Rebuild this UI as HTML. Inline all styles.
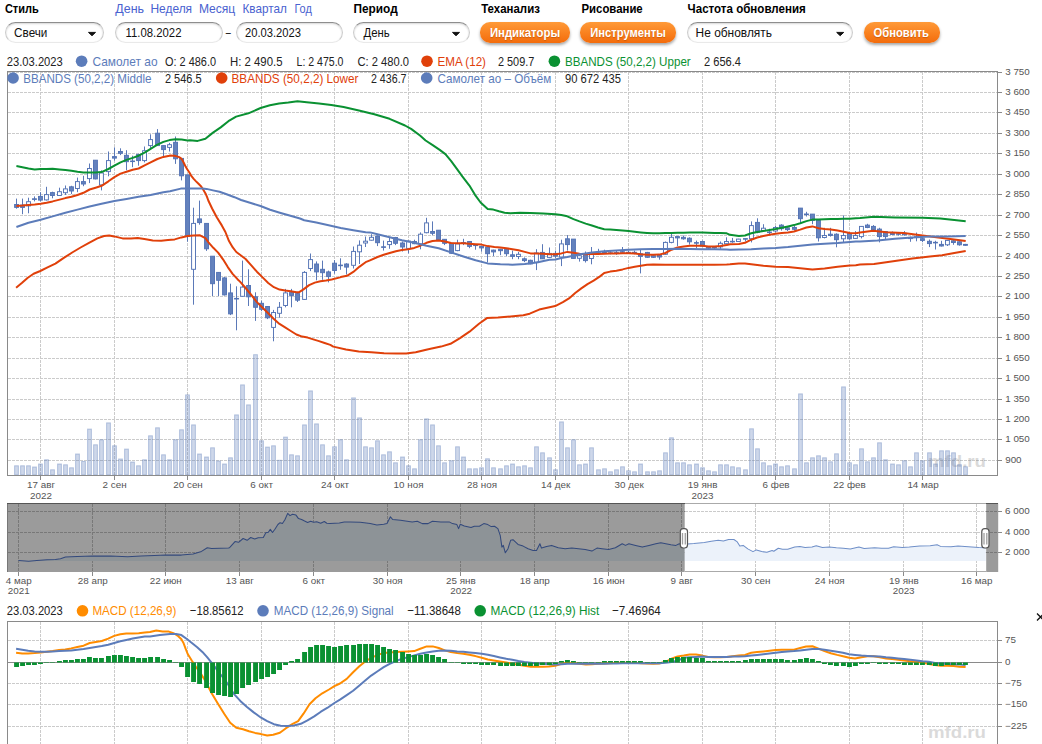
<!DOCTYPE html>
<html><head><meta charset="utf-8"><title>chart</title>
<style>
html,body{margin:0;padding:0;background:#fff;}
body{width:1042px;height:744px;position:relative;overflow:hidden;font-family:"Liberation Sans",sans-serif;}
.sel{position:absolute;top:22px;height:19px;border:1px solid;border-color:#8e8e8e #cbcbcb #e9e9e9 #cbcbcb;border-radius:11px;background:#fff;box-shadow:inset 0 1px 2px rgba(0,0,0,.16);}
.btn{position:absolute;top:22px;height:20.5px;border-radius:10px;background:linear-gradient(#ff9a38,#f9801e 55%,#f36c0c);box-shadow:0 2px 3px rgba(0,0,0,.35);}
svg{position:absolute;left:0;top:0;font-family:"Liberation Sans",sans-serif;}
</style></head><body>
<div class="sel" style="left:5px;width:97px"></div>
<div class="sel" style="left:115px;width:106px"></div>
<div class="sel" style="left:235.5px;width:105px"></div>
<div class="sel" style="left:353px;width:114.5px"></div>
<div class="sel" style="left:686.5px;width:164.5px"></div>
<div class="btn" style="left:480px;width:90px"></div>
<div class="btn" style="left:580px;width:96px"></div>
<div class="btn" style="left:863.5px;width:76.5px"></div>
<svg width="1042" height="744" viewBox="0 0 1042 744">
<text x="4.9" y="13.1" font-size="13" fill="#000" font-weight="bold" textLength="33.9" lengthAdjust="spacingAndGlyphs">Стиль</text>
<text x="115.3" y="13.1" font-size="13" fill="#4a62d0" textLength="28.7" lengthAdjust="spacingAndGlyphs">День</text>
<text x="150.4" y="13.1" font-size="13" fill="#4a62d0" textLength="41.7" lengthAdjust="spacingAndGlyphs">Неделя</text>
<text x="198.9" y="13.1" font-size="13" fill="#4a62d0" textLength="36.4" lengthAdjust="spacingAndGlyphs">Месяц</text>
<text x="242.5" y="13.1" font-size="13" fill="#4a62d0" textLength="44.4" lengthAdjust="spacingAndGlyphs">Квартал</text>
<text x="294.4" y="13.1" font-size="13" fill="#4a62d0" textLength="17.4" lengthAdjust="spacingAndGlyphs">Год</text>
<text x="353.5" y="13.1" font-size="13" fill="#000" font-weight="bold" textLength="44.2" lengthAdjust="spacingAndGlyphs">Период</text>
<text x="481.2" y="13.1" font-size="13" fill="#000" font-weight="bold" textLength="58.7" lengthAdjust="spacingAndGlyphs">Теханализ</text>
<text x="581.5" y="13.1" font-size="13" fill="#000" font-weight="bold" textLength="61.2" lengthAdjust="spacingAndGlyphs">Рисование</text>
<text x="687.6" y="13.1" font-size="13" fill="#000" font-weight="bold" textLength="118.2" lengthAdjust="spacingAndGlyphs">Частота обновления</text>
<text x="14.1" y="37.3" font-size="13" fill="#111" textLength="33.3" lengthAdjust="spacingAndGlyphs">Свечи</text>
<text x="125.5" y="37.3" font-size="13" fill="#111" textLength="56" lengthAdjust="spacingAndGlyphs">11.08.2022</text>
<text x="225.8" y="37.3" font-size="13" fill="#111" textLength="5" lengthAdjust="spacingAndGlyphs">–</text>
<text x="245" y="37.3" font-size="13" fill="#111" textLength="56" lengthAdjust="spacingAndGlyphs">20.03.2023</text>
<text x="363.5" y="37.3" font-size="13" fill="#111" textLength="26.2" lengthAdjust="spacingAndGlyphs">День</text>
<text x="695.6" y="37.3" font-size="13" fill="#111" textLength="76.4" lengthAdjust="spacingAndGlyphs">Не обновлять</text>
<path d="M88.5 32.4 h7 l-3.5 3.3 z" fill="#111" stroke="#111" stroke-width="1" stroke-linejoin="round"/>
<path d="M452.5 32.4 h7 l-3.5 3.3 z" fill="#111" stroke="#111" stroke-width="1" stroke-linejoin="round"/>
<path d="M836.7 32.4 h7 l-3.5 3.3 z" fill="#111" stroke="#111" stroke-width="1" stroke-linejoin="round"/>
<text x="489.9" y="37.2" font-size="13" fill="#fff" font-weight="bold" textLength="70.2" lengthAdjust="spacingAndGlyphs" style="text-shadow:0 1px 1px rgba(170,70,0,.55)">Индикаторы</text>
<text x="590.3" y="37.2" font-size="13" fill="#fff" font-weight="bold" textLength="75.6" lengthAdjust="spacingAndGlyphs" style="text-shadow:0 1px 1px rgba(170,70,0,.55)">Инструменты</text>
<text x="873.5" y="37.2" font-size="13" fill="#fff" font-weight="bold" textLength="55.5" lengthAdjust="spacingAndGlyphs" style="text-shadow:0 1px 1px rgba(170,70,0,.55)">Обновить</text>
<g stroke="#cbcbcb" stroke-width="1" stroke-dasharray="3 1" fill="none" shape-rendering="crispEdges">
<path d="M7.5 72.5 H997.5"/>
<path d="M7.5 92.5 H997.5"/>
<path d="M7.5 112.5 H997.5"/>
<path d="M7.5 133.5 H997.5"/>
<path d="M7.5 153.5 H997.5"/>
<path d="M7.5 174.5 H997.5"/>
<path d="M7.5 194.5 H997.5"/>
<path d="M7.5 215.5 H997.5"/>
<path d="M7.5 235.5 H997.5"/>
<path d="M7.5 256.5 H997.5"/>
<path d="M7.5 276.5 H997.5"/>
<path d="M7.5 296.5 H997.5"/>
<path d="M7.5 317.5 H997.5"/>
<path d="M7.5 337.5 H997.5"/>
<path d="M7.5 358.5 H997.5"/>
<path d="M7.5 378.5 H997.5"/>
<path d="M7.5 399.5 H997.5"/>
<path d="M7.5 419.5 H997.5"/>
<path d="M7.5 439.5 H997.5"/>
<path d="M7.5 460.5 H997.5"/>
<path d="M40.5 71.5 V475.5"/>
<path d="M114.5 71.5 V475.5"/>
<path d="M187.5 71.5 V475.5"/>
<path d="M261.5 71.5 V475.5"/>
<path d="M334.5 71.5 V475.5"/>
<path d="M408.5 71.5 V475.5"/>
<path d="M481.5 71.5 V475.5"/>
<path d="M555.5 71.5 V475.5"/>
<path d="M628.5 71.5 V475.5"/>
<path d="M702.5 71.5 V475.5"/>
<path d="M775.5 71.5 V475.5"/>
<path d="M849.5 71.5 V475.5"/>
<path d="M922.5 71.5 V475.5"/>
</g>
<text x="928" y="467" font-size="17" fill="#888" font-weight="bold" textLength="58" lengthAdjust="spacingAndGlyphs" opacity="0.30">mfd.ru</text>
<g fill="#5c7cba" fill-opacity="0.30" stroke="#5c7cba" stroke-opacity="0.40" stroke-width="1">
<rect x="14.6" y="465.8" width="3.8" height="9.2"/>
<rect x="20.6" y="465.8" width="3.8" height="9.2"/>
<rect x="26.6" y="465.8" width="3.8" height="9.2"/>
<rect x="32.6" y="467" width="3.8" height="8"/>
<rect x="38.6" y="464" width="3.8" height="11"/>
<rect x="44.6" y="459.8" width="3.8" height="15.2"/>
<rect x="50.6" y="469.8" width="3.8" height="5.2"/>
<rect x="57.6" y="464" width="3.8" height="11"/>
<rect x="63.6" y="464.8" width="3.8" height="10.2"/>
<rect x="69.6" y="467.8" width="3.8" height="7.2"/>
<rect x="75.6" y="454" width="3.8" height="21"/>
<rect x="81.6" y="461.5" width="3.8" height="13.5"/>
<rect x="87.6" y="429.1" width="3.8" height="45.9"/>
<rect x="93.6" y="444.8" width="3.8" height="30.2"/>
<rect x="99.6" y="439.8" width="3.8" height="35.2"/>
<rect x="106.6" y="422.9" width="3.8" height="52.1"/>
<rect x="112.6" y="445.8" width="3.8" height="29.2"/>
<rect x="118.6" y="459" width="3.8" height="16"/>
<rect x="124.6" y="449.1" width="3.8" height="25.9"/>
<rect x="130.6" y="462" width="3.8" height="13"/>
<rect x="136.6" y="465.8" width="3.8" height="9.2"/>
<rect x="142.6" y="459.8" width="3.8" height="15.2"/>
<rect x="148.6" y="435.8" width="3.8" height="39.2"/>
<rect x="155.6" y="427.8" width="3.8" height="47.2"/>
<rect x="161.6" y="454.8" width="3.8" height="20.2"/>
<rect x="167.6" y="459.8" width="3.8" height="15.2"/>
<rect x="173.6" y="439.8" width="3.8" height="35.2"/>
<rect x="179.6" y="429.8" width="3.8" height="45.2"/>
<rect x="185.6" y="394.9" width="3.8" height="80.1"/>
<rect x="191.6" y="424.9" width="3.8" height="50.1"/>
<rect x="197.6" y="454" width="3.8" height="21"/>
<rect x="204.6" y="457" width="3.8" height="18"/>
<rect x="210.6" y="447.8" width="3.8" height="27.2"/>
<rect x="216.6" y="461" width="3.8" height="14"/>
<rect x="222.6" y="464" width="3.8" height="11"/>
<rect x="228.6" y="457.8" width="3.8" height="17.2"/>
<rect x="234.6" y="414.9" width="3.8" height="60.1"/>
<rect x="240.6" y="384.9" width="3.8" height="90.1"/>
<rect x="246.6" y="404.9" width="3.8" height="70.1"/>
<rect x="253.6" y="354.7" width="3.8" height="120.3"/>
<rect x="259.6" y="440.8" width="3.8" height="34.2"/>
<rect x="265.6" y="447.1" width="3.8" height="27.9"/>
<rect x="271.6" y="445.8" width="3.8" height="29.2"/>
<rect x="277.6" y="460.3" width="3.8" height="14.7"/>
<rect x="283.6" y="437.1" width="3.8" height="37.9"/>
<rect x="289.6" y="454.8" width="3.8" height="20.2"/>
<rect x="295.6" y="455.8" width="3.8" height="19.2"/>
<rect x="302.6" y="424.9" width="3.8" height="50.1"/>
<rect x="308.6" y="390.9" width="3.8" height="84.1"/>
<rect x="314.6" y="423.9" width="3.8" height="51.1"/>
<rect x="320.6" y="444.8" width="3.8" height="30.2"/>
<rect x="326.6" y="455.8" width="3.8" height="19.2"/>
<rect x="332.6" y="446.8" width="3.8" height="28.2"/>
<rect x="338.6" y="439.8" width="3.8" height="35.2"/>
<rect x="344.6" y="459.8" width="3.8" height="15.2"/>
<rect x="351.6" y="397.9" width="3.8" height="77.1"/>
<rect x="357.6" y="417.9" width="3.8" height="57.1"/>
<rect x="363.6" y="446.8" width="3.8" height="28.2"/>
<rect x="369.6" y="447.8" width="3.8" height="27.2"/>
<rect x="375.6" y="440.8" width="3.8" height="34.2"/>
<rect x="381.6" y="454.8" width="3.8" height="20.2"/>
<rect x="387.6" y="451.8" width="3.8" height="23.2"/>
<rect x="393.6" y="462.8" width="3.8" height="12.2"/>
<rect x="400.6" y="457" width="3.8" height="18"/>
<rect x="406.6" y="465.8" width="3.8" height="9.2"/>
<rect x="412.6" y="468.8" width="3.8" height="6.2"/>
<rect x="418.6" y="439.8" width="3.8" height="35.2"/>
<rect x="424.6" y="418.9" width="3.8" height="56.1"/>
<rect x="430.6" y="424.9" width="3.8" height="50.1"/>
<rect x="436.6" y="445.8" width="3.8" height="29.2"/>
<rect x="442.6" y="462.8" width="3.8" height="12.2"/>
<rect x="449.6" y="460.8" width="3.8" height="14.2"/>
<rect x="455.6" y="446.8" width="3.8" height="28.2"/>
<rect x="461.6" y="457" width="3.8" height="18"/>
<rect x="467.6" y="468.8" width="3.8" height="6.2"/>
<rect x="473.6" y="468.8" width="3.8" height="6.2"/>
<rect x="479.6" y="467.8" width="3.8" height="7.2"/>
<rect x="485.6" y="458.8" width="3.8" height="16.2"/>
<rect x="491.6" y="467.8" width="3.8" height="7.2"/>
<rect x="498.6" y="468.8" width="3.8" height="6.2"/>
<rect x="504.6" y="465.8" width="3.8" height="9.2"/>
<rect x="510.6" y="464" width="3.8" height="11"/>
<rect x="516.6" y="466.8" width="3.8" height="8.2"/>
<rect x="522.6" y="465.8" width="3.8" height="9.2"/>
<rect x="528.6" y="467.8" width="3.8" height="7.2"/>
<rect x="534.6" y="446.8" width="3.8" height="28.2"/>
<rect x="540.6" y="452.8" width="3.8" height="22.2"/>
<rect x="547.6" y="457.8" width="3.8" height="17.2"/>
<rect x="553.6" y="469.8" width="3.8" height="5.2"/>
<rect x="559.6" y="421.9" width="3.8" height="53.1"/>
<rect x="565.6" y="447.8" width="3.8" height="27.2"/>
<rect x="571.6" y="439.8" width="3.8" height="35.2"/>
<rect x="577.6" y="464.8" width="3.8" height="10.2"/>
<rect x="583.6" y="464" width="3.8" height="11"/>
<rect x="589.6" y="447.8" width="3.8" height="27.2"/>
<rect x="596.6" y="469.8" width="3.8" height="5.2"/>
<rect x="602.6" y="468.8" width="3.8" height="6.2"/>
<rect x="608.6" y="471.8" width="3.8" height="3.2"/>
<rect x="614.6" y="469.8" width="3.8" height="5.2"/>
<rect x="620.6" y="466.8" width="3.8" height="8.2"/>
<rect x="626.6" y="470.8" width="3.8" height="4.2"/>
<rect x="632.6" y="471.8" width="3.8" height="3.2"/>
<rect x="638.6" y="464" width="3.8" height="11"/>
<rect x="645.6" y="471.8" width="3.8" height="3.2"/>
<rect x="651.6" y="471.8" width="3.8" height="3.2"/>
<rect x="657.6" y="470.8" width="3.8" height="4.2"/>
<rect x="663.6" y="452.8" width="3.8" height="22.2"/>
<rect x="669.6" y="437.8" width="3.8" height="37.2"/>
<rect x="675.6" y="462.8" width="3.8" height="12.2"/>
<rect x="681.6" y="462.8" width="3.8" height="12.2"/>
<rect x="687.6" y="464.8" width="3.8" height="10.2"/>
<rect x="694.6" y="464" width="3.8" height="11"/>
<rect x="700.6" y="467.8" width="3.8" height="7.2"/>
<rect x="706.6" y="470.8" width="3.8" height="4.2"/>
<rect x="712.6" y="471.8" width="3.8" height="3.2"/>
<rect x="718.6" y="464.8" width="3.8" height="10.2"/>
<rect x="724.6" y="464.8" width="3.8" height="10.2"/>
<rect x="730.6" y="466.8" width="3.8" height="8.2"/>
<rect x="736.6" y="467.8" width="3.8" height="7.2"/>
<rect x="743.6" y="469.8" width="3.8" height="5.2"/>
<rect x="749.6" y="428.8" width="3.8" height="46.2"/>
<rect x="755.6" y="448.8" width="3.8" height="26.2"/>
<rect x="761.6" y="462.8" width="3.8" height="12.2"/>
<rect x="767.6" y="465.8" width="3.8" height="9.2"/>
<rect x="773.6" y="464" width="3.8" height="11"/>
<rect x="779.6" y="466.8" width="3.8" height="8.2"/>
<rect x="785.6" y="465.8" width="3.8" height="9.2"/>
<rect x="792.6" y="468.8" width="3.8" height="6.2"/>
<rect x="798.6" y="393.9" width="3.8" height="81.1"/>
<rect x="804.6" y="462.8" width="3.8" height="12.2"/>
<rect x="810.6" y="457.8" width="3.8" height="17.2"/>
<rect x="816.6" y="455.8" width="3.8" height="19.2"/>
<rect x="822.6" y="457.8" width="3.8" height="17.2"/>
<rect x="828.6" y="461.8" width="3.8" height="13.2"/>
<rect x="834.6" y="453.8" width="3.8" height="21.2"/>
<rect x="841.6" y="386.9" width="3.8" height="88.1"/>
<rect x="847.6" y="462.8" width="3.8" height="12.2"/>
<rect x="853.6" y="464.8" width="3.8" height="10.2"/>
<rect x="859.6" y="448.8" width="3.8" height="26.2"/>
<rect x="865.6" y="461.8" width="3.8" height="13.2"/>
<rect x="871.6" y="457.8" width="3.8" height="17.2"/>
<rect x="877.6" y="442.8" width="3.8" height="32.2"/>
<rect x="883.6" y="459.8" width="3.8" height="15.2"/>
<rect x="890.6" y="464" width="3.8" height="11"/>
<rect x="896.6" y="464.8" width="3.8" height="10.2"/>
<rect x="902.6" y="460.8" width="3.8" height="14.2"/>
<rect x="908.6" y="466.8" width="3.8" height="8.2"/>
<rect x="914.6" y="452.8" width="3.8" height="22.2"/>
<rect x="920.6" y="460.8" width="3.8" height="14.2"/>
<rect x="927.6" y="452.8" width="3.8" height="22.2"/>
<rect x="933.6" y="464" width="3.8" height="11"/>
<rect x="939.6" y="450.8" width="3.8" height="24.2"/>
<rect x="945.6" y="450.8" width="3.8" height="24.2"/>
<rect x="951.6" y="452.8" width="3.8" height="22.2"/>
<rect x="957.6" y="464.8" width="3.8" height="10.2"/>
<rect x="963.6" y="466.8" width="3.8" height="8.2"/>
</g>
<g stroke="#5272b4" stroke-width="0.95">
<path d="M16.5 198.6 V208.7"/>
<rect x="14.6" y="204.5" width="3.9" height="2.9" fill="#6482bd"/>
<path d="M22.5 198.6 V214.2"/>
<rect x="20.6" y="205" width="3.9" height="2.4" fill="#6482bd"/>
<path d="M28.5 197.7 V213.3"/>
<rect x="26.6" y="201.7" width="3.9" height="4.2" fill="#fff"/>
<path d="M34.5 196.4 V201.4"/>
<rect x="32.5" y="198.8" width="3.9" height="0.6" fill="#6482bd"/>
<path d="M40.5 192.2 V201.4"/>
<rect x="38.5" y="196.4" width="3.9" height="3.7" fill="#6482bd"/>
<path d="M46.5 186.8 V200.5"/>
<rect x="44.5" y="194.6" width="3.9" height="5.3" fill="#fff"/>
<path d="M52.5 191.7 V198.3"/>
<rect x="50.5" y="192.6" width="3.9" height="2.9" fill="#6482bd"/>
<path d="M59.5 187.7 V195.9"/>
<rect x="57.5" y="191.7" width="3.9" height="3.8" fill="#fff"/>
<path d="M65.5 185.5 V195"/>
<rect x="63.5" y="188.9" width="3.9" height="3.8" fill="#fff"/>
<path d="M71.5 185.8 V194.1"/>
<rect x="69.5" y="186.8" width="3.9" height="4.2" fill="#6482bd"/>
<path d="M77.5 177.6 V192.2"/>
<rect x="75.5" y="181.6" width="3.9" height="6.9" fill="#fff"/>
<path d="M83.5 175.8 V186.2"/>
<rect x="81.5" y="181.6" width="3.9" height="2.4" fill="#6482bd"/>
<path d="M89.5 163.5 V183.1"/>
<rect x="87.5" y="168.5" width="3.9" height="10.1" fill="#fff"/>
<path d="M95.5 160.2 V179.4"/>
<rect x="93.5" y="160.2" width="3.9" height="18.7" fill="#6482bd"/>
<path d="M101.5 170.3 V190.4"/>
<rect x="99.5" y="173" width="3.9" height="11.9" fill="#fff"/>
<path d="M108.5 151.5 V176.3"/>
<rect x="106.5" y="160.6" width="3.9" height="11" fill="#fff"/>
<path d="M114.5 147.4 V160.6"/>
<rect x="112.5" y="156.6" width="3.9" height="1.5" fill="#6482bd"/>
<path d="M120.5 148.3 V155.1"/>
<rect x="118.5" y="151.5" width="3.9" height="1.8" fill="#6482bd"/>
<path d="M126.5 150.2 V170.3"/>
<rect x="124.5" y="155.3" width="3.9" height="6.4" fill="#6482bd"/>
<path d="M132.5 155.7 V167.2"/>
<rect x="130.6" y="161" width="3.9" height="0.6" fill="#6482bd"/>
<path d="M138.5 153.8 V165.7"/>
<rect x="136.6" y="154.4" width="3.9" height="6.2" fill="#6482bd"/>
<path d="M144.5 146.5 V162.4"/>
<rect x="142.6" y="150.7" width="3.9" height="9.9" fill="#fff"/>
<path d="M150.5 134.3 V148.3"/>
<rect x="148.6" y="139.6" width="3.9" height="6" fill="#fff"/>
<path d="M157.5 129.1 V145.6"/>
<rect x="155.6" y="133.2" width="3.9" height="12.4" fill="#6482bd"/>
<path d="M163.5 145.6 V156.6"/>
<rect x="161.6" y="145.6" width="3.9" height="4" fill="#6482bd"/>
<path d="M169.5 142.9 V151.5"/>
<rect x="167.6" y="144.7" width="3.9" height="2.7" fill="#fff"/>
<path d="M175.5 136.5 V163.9"/>
<rect x="173.6" y="142.3" width="3.9" height="16.5" fill="#6482bd"/>
<path d="M181.5 158.4 V180.4"/>
<rect x="179.6" y="158.4" width="3.9" height="17.4" fill="#6482bd"/>
<path d="M187.5 174.9 V241.7"/>
<rect x="185.6" y="174.9" width="3.9" height="61.6" fill="#6482bd"/>
<path d="M193.5 207.7 V304.7"/>
<rect x="191.6" y="223.4" width="3.9" height="45.9" fill="#fff"/>
<path d="M199.5 200.6 V224.7"/>
<rect x="197.6" y="218.9" width="3.9" height="3.7" fill="#6482bd"/>
<path d="M206.5 223.4 V250.9"/>
<rect x="204.6" y="223.4" width="3.9" height="25.4" fill="#6482bd"/>
<path d="M212.5 256.2 V296"/>
<rect x="210.6" y="256.2" width="3.9" height="27.5" fill="#6482bd"/>
<path d="M218.5 272.4 V296"/>
<rect x="216.6" y="272.4" width="3.9" height="7.9" fill="#6482bd"/>
<path d="M224.5 277.1 V295.5"/>
<rect x="222.6" y="277.9" width="3.9" height="17" fill="#6482bd"/>
<path d="M230.5 283.7 V315.1"/>
<rect x="228.6" y="292.9" width="3.9" height="21" fill="#6482bd"/>
<path d="M236.5 286.3 V330.3"/>
<rect x="234.6" y="298.4" width="3.9" height="0.6" fill="#6482bd"/>
<path d="M242.5 260.6 V296.8"/>
<rect x="240.6" y="287.1" width="3.9" height="9.2" fill="#fff"/>
<path d="M248.5 269.3 V306"/>
<rect x="246.6" y="285.5" width="3.9" height="11.3" fill="#6482bd"/>
<path d="M255.5 292.3 V320.9"/>
<rect x="253.6" y="296.8" width="3.9" height="10.5" fill="#6482bd"/>
<path d="M261.5 300.7 V311.2"/>
<rect x="259.6" y="303.3" width="3.9" height="6" fill="#6482bd"/>
<path d="M267.5 306.5 V319.1"/>
<rect x="265.6" y="306.5" width="3.9" height="11.3" fill="#6482bd"/>
<path d="M273.5 309.9 V341.3"/>
<rect x="271.6" y="312.5" width="3.9" height="14.9" fill="#fff"/>
<path d="M279.5 302 V317.8"/>
<rect x="277.6" y="307.3" width="3.9" height="6" fill="#fff"/>
<path d="M285.5 288.9 V307.3"/>
<rect x="283.6" y="292.9" width="3.9" height="12.6" fill="#fff"/>
<path d="M291.5 288.9 V307.3"/>
<rect x="289.6" y="292.3" width="3.9" height="3.1" fill="#6482bd"/>
<path d="M297.5 292.9 V302"/>
<rect x="295.6" y="293.6" width="3.9" height="6.6" fill="#6482bd"/>
<path d="M304.5 271.1 V299.9"/>
<rect x="302.6" y="272.4" width="3.9" height="27" fill="#fff"/>
<path d="M310.5 253.5 V271.1"/>
<rect x="308.6" y="259.6" width="3.9" height="8.9" fill="#fff"/>
<path d="M316.5 261.4 V280.3"/>
<rect x="314.6" y="264" width="3.9" height="7.9" fill="#6482bd"/>
<path d="M322.5 260.6 V279.8"/>
<rect x="320.6" y="269.3" width="3.9" height="3.4" fill="#6482bd"/>
<path d="M328.5 270.6 V282.4"/>
<rect x="326.6" y="271.9" width="3.9" height="4.7" fill="#6482bd"/>
<path d="M334.5 260.1 V273.7"/>
<rect x="332.6" y="263.2" width="3.9" height="7.3" fill="#6482bd"/>
<path d="M340.5 258.3 V269.8"/>
<rect x="338.6" y="265.1" width="3.9" height="0.6" fill="#6482bd"/>
<path d="M346.5 263.2 V274.5"/>
<rect x="344.6" y="264" width="3.9" height="3.1" fill="#6482bd"/>
<path d="M353.5 246.5 V268.5"/>
<rect x="351.6" y="251.4" width="3.9" height="13.9" fill="#fff"/>
<path d="M359.5 240.4 V264"/>
<rect x="357.6" y="245.2" width="3.9" height="6.6" fill="#fff"/>
<path d="M365.5 236.5 V247"/>
<rect x="363.6" y="241.2" width="3.9" height="1.8" fill="#fff"/>
<path d="M371.5 234.2 V240.6"/>
<rect x="369.6" y="237.3" width="3.9" height="2.9" fill="#fff"/>
<path d="M377.5 235.5 V246.1"/>
<rect x="375.6" y="236" width="3.9" height="6.7" fill="#6482bd"/>
<path d="M383.5 240.6 V250.6"/>
<rect x="381.6" y="246.8" width="3.9" height="0.6" fill="#6482bd"/>
<path d="M389.5 236.9 V248.8"/>
<rect x="387.6" y="241.5" width="3.9" height="3.1" fill="#fff"/>
<path d="M395.5 236.9 V245.1"/>
<rect x="393.6" y="237.5" width="3.9" height="5.8" fill="#6482bd"/>
<path d="M402.5 241.5 V251.5"/>
<rect x="400.6" y="243" width="3.9" height="4" fill="#6482bd"/>
<path d="M408.5 240.6 V253.4"/>
<rect x="406.6" y="241.1" width="3.9" height="7.3" fill="#fff"/>
<path d="M414.5 239.7 V244.2"/>
<rect x="412.6" y="241.5" width="3.9" height="2.2" fill="#6482bd"/>
<path d="M420.5 232.4 V249.3"/>
<rect x="418.6" y="234.2" width="3.9" height="9.7" fill="#fff"/>
<path d="M426.5 217.8 V233.3"/>
<rect x="424.6" y="222.9" width="3.9" height="9.8" fill="#fff"/>
<path d="M432.5 221.4 V235.1"/>
<rect x="430.6" y="231.5" width="3.9" height="1.8" fill="#6482bd"/>
<path d="M438.5 230.2 V240.6"/>
<rect x="436.6" y="230.2" width="3.9" height="10" fill="#6482bd"/>
<path d="M444.5 239.3 V245.1"/>
<rect x="442.6" y="239.3" width="3.9" height="4" fill="#6482bd"/>
<path d="M451.5 242.8 V253.7"/>
<rect x="449.6" y="243.3" width="3.9" height="10" fill="#6482bd"/>
<path d="M457.5 239.7 V251.2"/>
<rect x="455.6" y="243.9" width="3.9" height="6.7" fill="#fff"/>
<path d="M463.5 238.8 V245.1"/>
<rect x="461.6" y="242.6" width="3.9" height="0.6" fill="#6482bd"/>
<path d="M469.5 241.5 V248.2"/>
<rect x="467.6" y="241.5" width="3.9" height="4.9" fill="#6482bd"/>
<path d="M475.5 244.2 V249.7"/>
<rect x="473.6" y="245" width="3.9" height="0.6" fill="#6482bd"/>
<path d="M481.5 246.1 V251.5"/>
<rect x="479.6" y="246.4" width="3.9" height="1.5" fill="#6482bd"/>
<path d="M487.5 246.6 V262.5"/>
<rect x="485.6" y="247" width="3.9" height="6.7" fill="#6482bd"/>
<path d="M493.5 249.7 V256.1"/>
<rect x="491.6" y="250.1" width="3.9" height="1.8" fill="#6482bd"/>
<path d="M500.5 248.8 V255.2"/>
<rect x="498.6" y="249.2" width="3.9" height="1.5" fill="#6482bd"/>
<path d="M506.5 249.3 V256.1"/>
<rect x="504.6" y="249.3" width="3.9" height="4.4" fill="#6482bd"/>
<path d="M512.5 250.6 V259.2"/>
<rect x="510.6" y="254.8" width="3.9" height="1.6" fill="#6482bd"/>
<path d="M518.5 251.9 V259.2"/>
<rect x="516.5" y="254.3" width="3.9" height="2.2" fill="#fff"/>
<path d="M524.5 257.4 V262.1"/>
<rect x="522.5" y="258.8" width="3.9" height="1.8" fill="#6482bd"/>
<path d="M530.5 259.7 V264.3"/>
<rect x="528.5" y="260.3" width="3.9" height="3.6" fill="#6482bd"/>
<path d="M536.5 249.2 V270.1"/>
<rect x="534.5" y="253" width="3.9" height="9.1" fill="#fff"/>
<path d="M542.5 244.2 V258.8"/>
<rect x="540.5" y="252.4" width="3.9" height="6.4" fill="#6482bd"/>
<path d="M549.5 247.5 V257.9"/>
<rect x="547.5" y="253.4" width="3.9" height="4" fill="#fff"/>
<path d="M555.5 250.6 V257.9"/>
<rect x="553.5" y="253.4" width="3.9" height="2.7" fill="#6482bd"/>
<path d="M561.5 239.7 V266.1"/>
<rect x="559.5" y="243.9" width="3.9" height="13.1" fill="#fff"/>
<path d="M567.5 235.1 V250.6"/>
<rect x="565.5" y="238.8" width="3.9" height="5.8" fill="#6482bd"/>
<path d="M573.5 239.1 V258.5"/>
<rect x="571.5" y="239.1" width="3.9" height="19.3" fill="#6482bd"/>
<path d="M579.5 253.4 V261.6"/>
<rect x="577.5" y="255.7" width="3.9" height="2.6" fill="#fff"/>
<path d="M585.5 251.5 V262.5"/>
<rect x="583.5" y="253.7" width="3.9" height="6.9" fill="#6482bd"/>
<path d="M591.5 247 V264.3"/>
<rect x="589.5" y="253" width="3.9" height="5.5" fill="#fff"/>
<path d="M598.5 248.8 V254.3"/>
<rect x="596.5" y="252.8" width="3.9" height="0.6" fill="#6482bd"/>
<path d="M604.5 249.7 V253.7"/>
<rect x="602.5" y="252.3" width="3.9" height="0.6" fill="#6482bd"/>
<path d="M610.5 250.6 V254.3"/>
<rect x="608.5" y="252.8" width="3.9" height="0.6" fill="#6482bd"/>
<path d="M616.5 250.6 V254.8"/>
<rect x="614.5" y="252.6" width="3.9" height="0.6" fill="#6482bd"/>
<path d="M622.5 247 V253.7"/>
<rect x="620.5" y="251.7" width="3.9" height="0.6" fill="#6482bd"/>
<path d="M628.5 250.6 V253.7"/>
<rect x="626.5" y="252.3" width="3.9" height="0.6" fill="#6482bd"/>
<path d="M634.5 250.6 V254.3"/>
<rect x="632.5" y="252.3" width="3.9" height="0.6" fill="#6482bd"/>
<path d="M640.5 249.7 V273.4"/>
<rect x="638.5" y="253.7" width="3.9" height="2.7" fill="#6482bd"/>
<path d="M647.5 251.9 V257.9"/>
<rect x="645.5" y="252.4" width="3.9" height="4.9" fill="#6482bd"/>
<path d="M653.5 255.2 V257.9"/>
<rect x="651.5" y="255.7" width="3.9" height="1.6" fill="#6482bd"/>
<path d="M659.5 254.3 V259.7"/>
<rect x="657.5" y="255.2" width="3.9" height="1.8" fill="#6482bd"/>
<path d="M665.5 241.5 V254.8"/>
<rect x="663.5" y="242.4" width="3.9" height="11.9" fill="#fff"/>
<path d="M671.5 233.7 V243.3"/>
<rect x="669.5" y="237.3" width="3.9" height="5.1" fill="#fff"/>
<path d="M677.5 236 V246.1"/>
<rect x="675.5" y="236.6" width="3.9" height="1.3" fill="#6482bd"/>
<path d="M683.5 235.5 V239.7"/>
<rect x="681.5" y="237.3" width="3.9" height="1.5" fill="#6482bd"/>
<path d="M689.5 237.3 V244.6"/>
<rect x="687.5" y="238.2" width="3.9" height="3.6" fill="#6482bd"/>
<path d="M696.5 240.6 V248.2"/>
<rect x="694.5" y="242.6" width="3.9" height="0.6" fill="#6482bd"/>
<path d="M702.5 240.6 V247"/>
<rect x="700.5" y="241.5" width="3.9" height="4.6" fill="#6482bd"/>
<path d="M708.5 246.1 V249.7"/>
<rect x="706.5" y="246.6" width="3.9" height="1.6" fill="#6482bd"/>
<path d="M714.5 246.1 V248.8"/>
<rect x="712.5" y="247.3" width="3.9" height="0.6" fill="#6482bd"/>
<path d="M720.5 241.5 V248.8"/>
<rect x="718.5" y="243.3" width="3.9" height="3.6" fill="#fff"/>
<path d="M726.5 237.3 V244.2"/>
<rect x="724.5" y="241.5" width="3.9" height="2.2" fill="#fff"/>
<path d="M732.5 237.9 V242.8"/>
<rect x="730.5" y="241.3" width="3.9" height="0.6" fill="#6482bd"/>
<path d="M738.5 238.8 V241.9"/>
<rect x="736.5" y="239.1" width="3.9" height="2.4" fill="#fff"/>
<path d="M745.5 238.4 V241.5"/>
<rect x="743.5" y="238.6" width="3.9" height="0.6" fill="#6482bd"/>
<path d="M751.5 221.4 V242.4"/>
<rect x="749.5" y="225.6" width="3.9" height="13.1" fill="#fff"/>
<path d="M757.5 218.3 V233.3"/>
<rect x="755.5" y="222.4" width="3.9" height="10" fill="#6482bd"/>
<path d="M763.5 224.2 V231.5"/>
<rect x="761.5" y="228.2" width="3.9" height="2.4" fill="#fff"/>
<path d="M769.5 228.7 V235.5"/>
<rect x="767.5" y="232" width="3.9" height="0.6" fill="#6482bd"/>
<path d="M775.5 226 V232.4"/>
<rect x="773.5" y="227.5" width="3.9" height="3.5" fill="#fff"/>
<path d="M781.5 224.2 V230.6"/>
<rect x="779.5" y="225.1" width="3.9" height="3.6" fill="#6482bd"/>
<path d="M787.5 226.9 V231.1"/>
<rect x="785.5" y="227.8" width="3.9" height="1.8" fill="#6482bd"/>
<path d="M794.5 226 V230.6"/>
<rect x="792.5" y="227.5" width="3.9" height="1.8" fill="#6482bd"/>
<path d="M800.5 208.1 V222.7"/>
<rect x="798.5" y="208.1" width="3.9" height="10.6" fill="#6482bd"/>
<path d="M806.5 211.8 V216.5"/>
<rect x="804.5" y="214" width="3.9" height="0.6" fill="#6482bd"/>
<path d="M812.5 214.1 V224.2"/>
<rect x="810.5" y="214.1" width="3.9" height="6.4" fill="#6482bd"/>
<path d="M818.5 220.5 V241.5"/>
<rect x="816.5" y="220.5" width="3.9" height="17.3" fill="#6482bd"/>
<path d="M824.5 227.8 V238.4"/>
<rect x="822.5" y="235.5" width="3.9" height="2" fill="#fff"/>
<path d="M830.5 227.8 V236.6"/>
<rect x="828.5" y="234.2" width="3.9" height="1.3" fill="#6482bd"/>
<path d="M836.5 233.3 V247.3"/>
<rect x="834.5" y="234.2" width="3.9" height="5.5" fill="#6482bd"/>
<path d="M843.5 215.4 V242.8"/>
<rect x="841.5" y="235.5" width="3.9" height="3.3" fill="#fff"/>
<path d="M849.5 232.4 V239.7"/>
<rect x="847.5" y="233.3" width="3.9" height="5.5" fill="#6482bd"/>
<path d="M855.5 231.1 V238.8"/>
<rect x="853.5" y="235.5" width="3.9" height="2.9" fill="#fff"/>
<path d="M861.5 226 V238.4"/>
<rect x="859.5" y="226.4" width="3.9" height="10.2" fill="#fff"/>
<path d="M867.5 223.8 V228.2"/>
<rect x="865.5" y="225.1" width="3.9" height="2.4" fill="#6482bd"/>
<path d="M873.5 225.1 V230.6"/>
<rect x="871.5" y="226.4" width="3.9" height="3.3" fill="#6482bd"/>
<path d="M879.5 227.8 V242.4"/>
<rect x="877.5" y="229.1" width="3.9" height="7.5" fill="#6482bd"/>
<path d="M885.5 231.1 V239.7"/>
<rect x="883.5" y="231.5" width="3.9" height="5.1" fill="#6482bd"/>
<path d="M892.5 231.5 V235.1"/>
<rect x="890.5" y="232.9" width="3.9" height="1.6" fill="#6482bd"/>
<path d="M898.5 232.4 V235.5"/>
<rect x="896.5" y="233.7" width="3.9" height="0.6" fill="#6482bd"/>
<path d="M904.5 231.1 V235.5"/>
<rect x="902.5" y="233.3" width="3.9" height="1.5" fill="#6482bd"/>
<path d="M910.5 236.6 V241.8"/>
<rect x="908.5" y="237.4" width="3.9" height="1.2" fill="#6482bd"/>
<path d="M916.5 232.6 V241.3"/>
<rect x="914.5" y="236.7" width="3.9" height="0.6" fill="#6482bd"/>
<path d="M922.5 237.8 V242.2"/>
<rect x="920.5" y="238.7" width="3.9" height="1.7" fill="#6482bd"/>
<path d="M929.5 239.5 V247.1"/>
<rect x="927.5" y="241.3" width="3.9" height="2.3" fill="#6482bd"/>
<path d="M935.5 240.8 V249.5"/>
<rect x="933.5" y="242.3" width="3.9" height="0.6" fill="#6482bd"/>
<path d="M941.5 240.8 V246.5"/>
<rect x="939.5" y="244.4" width="3.9" height="1.6" fill="#6482bd"/>
<path d="M947.5 240.1 V246"/>
<rect x="945.5" y="240.4" width="3.9" height="4.4" fill="#fff"/>
<path d="M953.5 240.1 V244.8"/>
<rect x="951.5" y="240.8" width="3.9" height="1.7" fill="#6482bd"/>
<path d="M959.5 241.3 V245.7"/>
<rect x="957.5" y="241.8" width="3.9" height="3" fill="#6482bd"/>
<path d="M965.5 243.9 V245.7"/>
<rect x="963.5" y="244.4" width="3.9" height="0.9" fill="#6482bd"/>
</g>
<polyline points="16.4,206 22.4,205.6 28.5,205 34.7,204.5 40.7,203.8 46.6,202.7 52.6,201.4 59.6,199.6 65.4,198.1 71.5,196.8 77.5,195 83.5,192.8 89.6,189.5 95.6,187.7 101.6,185.8 108.4,181.3 114.4,177.1 120.5,173.6 126.5,171.8 132.7,169.7 138.6,168.5 144.6,165.4 150.6,162.4 157.4,159 163.4,156.9 169.5,155.7 170,155.5 174.3,155.8 178.6,156.9 180.8,158.2 182.4,160.1 184,163.3 185.6,166.6 187.2,169.2 189.4,172.5 191.5,176.2 193.7,178.9 195.8,181.1 198.5,183.8 201.2,186.5 203.3,189.7 205.5,193.4 207.1,197.2 208.3,200.5 212.1,208.5 216.9,217.5 221.8,225.4 225.4,232 229,241.1 232.6,247.2 236.3,252 240,254.8 245.6,259 251.3,265.4 256.9,271.7 262.6,277.4 268.2,283 273.9,287.2 279.5,289.6 285.1,290.5 290.8,291.2 296.4,292.2 299.2,292.2 303.5,289.4 309.1,285.1 314.8,282.6 320.4,281.2 326,280.6 331.7,279.5 340,277.4 340.7,277.1 347,275.8 353.3,271.9 359.6,266.6 365.6,262.2 370,260.3 377.5,257 383.7,254.8 389.7,253 395.9,251.2 401.9,250.1 408.1,249.2 414.3,247.9 420.3,245.7 426.5,242.8 432.5,241 438.7,240.6 444.9,241.5 451,243 457.2,243.3 463.4,243.3 469.4,243.7 475.6,244.2 481.6,244.6 487.6,246.1 494.4,247 500.4,247.5 506.4,248.2 512.4,249.3 518.6,250.3 524.8,251.9 530.5,253.4 536.7,253.4 543.2,253.7 549.4,254.3 555.5,254.3 561.3,253.4 567.3,251.9 573.5,252.8 579.5,253.7 585.7,254.3 591.9,254.1 598,253.9 604.2,253.7 610.2,253.4 616.4,253.4 622.6,253.2 628.6,253.2 634.8,253.4 640.8,254.3 647,254.8 653.2,254.8 659.2,254.6 665.4,253 671.6,249.7 677.6,247.5 683.8,246.4 689.9,245.7 696.1,245.7 702.3,245.7 708.3,246.4 714.5,246.6 720.5,246.1 726.7,245.1 730,244.2 738.9,243.9 745,242.8 751.2,239.7 757.2,237.5 763.4,236 769.6,234.8 775.6,233.7 781.8,232.9 788,232.4 794,231.5 800.2,229.6 806.4,227.5 812.4,226.4 818.6,228.2 824.6,229.1 830.8,229.6 837.6,230.6 843.6,231.8 849.8,232.9 855.8,233.3 860,232.6 873.1,230.8 886.2,232.2 903.7,233.1 922.5,235.5 940.3,237.8 954.3,239.5 965.7,241.1" fill="none" stroke="#e0400a" stroke-width="2" stroke-linejoin="round" stroke-linecap="butt"/>
<polyline points="16.4,166.1 22.4,167.2 28.5,168.5 34.7,169.4 40.7,169 46.6,169 52.6,168.8 59.6,169.4 65.4,169.9 71.5,170.8 77.5,171.8 83.5,172.5 89.6,172.5 95.6,172.5 101.6,172.1 108.4,169 114.4,165.7 120.5,162.4 126.5,159.9 132.7,157.9 138.6,155.7 144.6,152.6 150.6,148.9 157.4,144.7 163.4,141.9 169.5,140.1 175.5,139.2 181.6,139.6 187.6,140.5 190,140.3 197.7,140.9 205.4,138.7 213,132.6 220.7,127.4 228.4,121.2 236.1,116.6 248.4,113.3 260.6,108 269.9,105.3 279.1,103.4 288.3,102.5 297.5,101.3 306.7,102.2 319,103.4 331.3,105 343.6,107.1 358.9,110.5 374.3,114.2 389.6,118.8 405,125.5 411.1,128.9 420,135.5 425.6,140.5 432.7,145.1 439.7,149.9 445.4,154.1 451,160.9 456.7,168.7 462.3,176.4 469.4,185.6 475,194.8 480.6,202.5 487.7,208.9 493.3,209.6 499,211.3 504.6,212.8 510.3,213.2 520,212.8 530.5,212.9 543.2,213.6 555.4,214.3 561.3,215.1 567.3,216.3 573.5,219.1 579.5,221.4 585.7,223.6 591.9,225.5 598,227.5 604.2,229.3 610.2,229.6 616.4,230 622.6,230.6 628.6,231.1 634.8,231.8 640.8,232.4 647,232.9 653.2,233.3 659.2,233.3 665.4,233.1 671.6,232.9 677.6,232.7 683.8,232.7 689.9,232.6 696.1,232.6 702.3,232.6 708.3,232.7 714.5,232.9 720.5,232.9 726.7,233.3 730,234.8 738.9,236 745,235.5 751.2,233.3 757.2,232 763.4,230.9 769.6,230 775.6,229.1 781.8,227.8 788,226.4 794,225.1 800.2,223.3 806.4,221.1 812.4,219.6 818.6,219.4 824.6,219.3 830.8,219.1 837.6,218.9 843.6,218.7 849.8,218.7 855.8,218.3 860,218.1 874,216.8 894.9,217.4 922.5,217.7 940.3,218.6 954.3,220 965.7,221.2" fill="none" stroke="#0a9132" stroke-width="2" stroke-linejoin="round" stroke-linecap="butt"/>
<polyline points="16.4,227 28.5,222.8 40.7,219.7 52.6,216.4 65.4,212.7 77.5,209.6 89.6,206.5 101.6,203.8 114.4,201 126.5,199 138.6,196.8 150.6,195 163.4,192.2 170,191.3 180.8,188.6 191.5,188.4 202.3,188.4 206.6,188.9 213,190.4 219.5,191.8 225.9,194 234.5,197.2 241.1,200 250.8,203 260.5,206 270.1,209.7 279.8,212.7 289.5,215.5 300,218.5 304.2,220.2 316.3,222.6 328.6,225.2 340.7,227.9 353.3,230.2 365.6,232.3 370,232.4 377.5,234.2 389.7,237.3 401.9,240.2 414.3,242.8 426.5,245.7 438.7,248.2 451,252.4 463.4,256.5 475.6,260.3 487.6,263.4 500.4,264.3 512.4,264.7 524.8,263.9 536.7,262.5 549.4,259.7 555.5,259.4 561.3,258.1 567.3,257 573.5,255.7 579.5,254.3 585.7,253.4 591.9,252.4 604.2,251.2 616.4,250.4 628.6,249.7 640.8,249.2 653.2,249 665.4,249 677.6,248.8 689.9,249 702.3,249.2 714.5,249.3 726.7,249.5 730,249.7 738.9,249.5 751.2,249.2 763.4,248.4 775.6,247.9 788,247 800.2,245.7 812.4,244.6 824.6,243.7 837.6,243 849.8,242 855.8,241.5 860,241.6 877.5,240.4 894.9,238.7 912.4,237.4 929.9,236.6 947.3,236.4 965.7,236" fill="none" stroke="#5c7cba" stroke-width="2" stroke-linejoin="round" stroke-linecap="butt"/>
<polyline points="16.1,287.8 21.8,283.1 27.5,278 33.6,273.7 40.3,271 47,267.6 55.4,263.6 63.8,257.9 72.2,252.5 80.6,247.5 89,242.8 97.4,238.4 104.1,236 109.2,235.4 114.2,236.4 122.6,238.4 131,238.4 137.7,238.1 144.4,239.1 152.8,240.4 161.2,240.7 168,240.1 174.7,239.4 181.4,237.4 187.6,236 193.6,235.5 200,235.3 205.4,238.1 208.5,242.3 213.3,247.8 218.1,252.6 223,259.3 227.8,267.1 232.6,273.8 237.5,279.2 240,281.6 245.6,288 251.3,295 256.9,302.1 262.6,307.7 268.2,313.3 273.9,319 279.5,323.9 285.1,327.4 290.8,331 296.4,334.5 302.1,336.6 307.7,337.6 313.3,339.4 319,341.1 324.6,343 330.3,344.9 333.3,346.6 346,349.5 358.7,351.4 371.3,352.3 384,353.3 396.7,353.6 406.2,353.6 415.7,352.3 428.3,349.2 441,346.6 450.5,343.8 460,338.1 469.5,331.7 479,323.8 486.9,318.1 498,317.5 510.7,316.5 523.3,315.3 529.7,313.7 539.2,309.6 555.2,306.1 562.9,302.2 569,298.4 575.2,293 581.3,288.4 587.5,284.1 593.6,280.7 600,276.4 604.2,273 610.2,271.6 616.4,270.7 622.6,269.4 628.6,267.9 634.8,266.7 640.8,265.8 647,264.8 653.2,264.5 665.4,264.7 677.6,264.8 689.9,264.8 702.3,264.8 714.5,264.8 726.7,264.5 730,264.3 738.9,263.4 745,263.4 751.2,264.3 763.4,265.8 775.6,266.7 788,267 800.2,268.3 812.4,269.4 824.6,268.5 837.6,266.7 849.8,265.6 855.8,265.2 860,264.5 874,264 886.2,262.2 894.9,260.9 912.4,258.4 929.9,256.5 942.1,255.3 954.3,253 965.7,250.9" fill="none" stroke="#e0400a" stroke-width="2" stroke-linejoin="round" stroke-linecap="butt"/>
<g stroke="#8a8a8a" stroke-width="1" fill="none" shape-rendering="crispEdges">
<path d="M7.5 71.5 V475.5 H997.5 V71.5 Z"/>
<path d="M997.5 72.5 h4.5"/>
<path d="M997.5 92.5 h4.5"/>
<path d="M997.5 112.5 h4.5"/>
<path d="M997.5 133.5 h4.5"/>
<path d="M997.5 153.5 h4.5"/>
<path d="M997.5 174.5 h4.5"/>
<path d="M997.5 194.5 h4.5"/>
<path d="M997.5 215.5 h4.5"/>
<path d="M997.5 235.5 h4.5"/>
<path d="M997.5 256.5 h4.5"/>
<path d="M997.5 276.5 h4.5"/>
<path d="M997.5 296.5 h4.5"/>
<path d="M997.5 317.5 h4.5"/>
<path d="M997.5 337.5 h4.5"/>
<path d="M997.5 358.5 h4.5"/>
<path d="M997.5 378.5 h4.5"/>
<path d="M997.5 399.5 h4.5"/>
<path d="M997.5 419.5 h4.5"/>
<path d="M997.5 439.5 h4.5"/>
<path d="M997.5 460.5 h4.5"/>
<path d="M40.5 475.5 v4"/>
<path d="M114.5 475.5 v4"/>
<path d="M187.5 475.5 v4"/>
<path d="M261.5 475.5 v4"/>
<path d="M334.5 475.5 v4"/>
<path d="M408.5 475.5 v4"/>
<path d="M481.5 475.5 v4"/>
<path d="M555.5 475.5 v4"/>
<path d="M628.5 475.5 v4"/>
<path d="M702.5 475.5 v4"/>
<path d="M775.5 475.5 v4"/>
<path d="M849.5 475.5 v4"/>
<path d="M922.5 475.5 v4"/>
</g>
<text x="1005.2" y="75.2" font-size="9" fill="#555555" textLength="24.6" lengthAdjust="spacingAndGlyphs">3 750</text>
<text x="1005.2" y="95.2" font-size="9" fill="#555555" textLength="24.6" lengthAdjust="spacingAndGlyphs">3 600</text>
<text x="1005.2" y="115.2" font-size="9" fill="#555555" textLength="24.6" lengthAdjust="spacingAndGlyphs">3 450</text>
<text x="1005.2" y="136.2" font-size="9" fill="#555555" textLength="24.6" lengthAdjust="spacingAndGlyphs">3 300</text>
<text x="1005.2" y="156.2" font-size="9" fill="#555555" textLength="24.6" lengthAdjust="spacingAndGlyphs">3 150</text>
<text x="1005.2" y="177.2" font-size="9" fill="#555555" textLength="24.6" lengthAdjust="spacingAndGlyphs">3 000</text>
<text x="1005.2" y="197.2" font-size="9" fill="#555555" textLength="24.6" lengthAdjust="spacingAndGlyphs">2 850</text>
<text x="1005.2" y="218.2" font-size="9" fill="#555555" textLength="24.6" lengthAdjust="spacingAndGlyphs">2 700</text>
<text x="1005.2" y="238.2" font-size="9" fill="#555555" textLength="24.6" lengthAdjust="spacingAndGlyphs">2 550</text>
<text x="1005.2" y="259.2" font-size="9" fill="#555555" textLength="24.6" lengthAdjust="spacingAndGlyphs">2 400</text>
<text x="1005.2" y="279.2" font-size="9" fill="#555555" textLength="24.6" lengthAdjust="spacingAndGlyphs">2 250</text>
<text x="1005.2" y="299.2" font-size="9" fill="#555555" textLength="24.6" lengthAdjust="spacingAndGlyphs">2 100</text>
<text x="1005.2" y="320.2" font-size="9" fill="#555555" textLength="24.6" lengthAdjust="spacingAndGlyphs">1 950</text>
<text x="1005.2" y="340.2" font-size="9" fill="#555555" textLength="24.6" lengthAdjust="spacingAndGlyphs">1 800</text>
<text x="1005.2" y="361.2" font-size="9" fill="#555555" textLength="24.6" lengthAdjust="spacingAndGlyphs">1 650</text>
<text x="1005.2" y="381.2" font-size="9" fill="#555555" textLength="24.6" lengthAdjust="spacingAndGlyphs">1 500</text>
<text x="1005.2" y="402.2" font-size="9" fill="#555555" textLength="24.6" lengthAdjust="spacingAndGlyphs">1 350</text>
<text x="1005.2" y="422.2" font-size="9" fill="#555555" textLength="24.6" lengthAdjust="spacingAndGlyphs">1 200</text>
<text x="1005.2" y="442.2" font-size="9" fill="#555555" textLength="24.6" lengthAdjust="spacingAndGlyphs">1 050</text>
<text x="1005.2" y="463.2" font-size="9" fill="#555555" textLength="16.4" lengthAdjust="spacingAndGlyphs">900</text>
<text x="27.1" y="488" font-size="9" fill="#555555" textLength="28" lengthAdjust="spacingAndGlyphs">17 авг</text>
<text x="102.6" y="488" font-size="9" fill="#555555" textLength="24.1" lengthAdjust="spacingAndGlyphs">2 сен</text>
<text x="173.3" y="488" font-size="9" fill="#555555" textLength="29.5" lengthAdjust="spacingAndGlyphs">20 сен</text>
<text x="250.3" y="488" font-size="9" fill="#555555" textLength="22.6" lengthAdjust="spacingAndGlyphs">6 окт</text>
<text x="321" y="488" font-size="9" fill="#555555" textLength="28.1" lengthAdjust="spacingAndGlyphs">24 окт</text>
<text x="393.6" y="488" font-size="9" fill="#555555" textLength="29.9" lengthAdjust="spacingAndGlyphs">10 ноя</text>
<text x="467.1" y="488" font-size="9" fill="#555555" textLength="29.9" lengthAdjust="spacingAndGlyphs">28 ноя</text>
<text x="541" y="488" font-size="9" fill="#555555" textLength="29.2" lengthAdjust="spacingAndGlyphs">14 дек</text>
<text x="614.5" y="488" font-size="9" fill="#555555" textLength="29.2" lengthAdjust="spacingAndGlyphs">30 дек</text>
<text x="687.8" y="488" font-size="9" fill="#555555" textLength="29.7" lengthAdjust="spacingAndGlyphs">19 янв</text>
<text x="762.6" y="488" font-size="9" fill="#555555" textLength="27" lengthAdjust="spacingAndGlyphs">6 фев</text>
<text x="833.3" y="488" font-size="9" fill="#555555" textLength="32.5" lengthAdjust="spacingAndGlyphs">22 фев</text>
<text x="907.4" y="488" font-size="9" fill="#555555" textLength="31.4" lengthAdjust="spacingAndGlyphs">14 мар</text>
<text x="30.1" y="498.8" font-size="9" fill="#555555" textLength="21.9" lengthAdjust="spacingAndGlyphs">2022</text>
<text x="691.6" y="498.8" font-size="9" fill="#555555" textLength="21.9" lengthAdjust="spacingAndGlyphs">2023</text>
<text x="6.8" y="66.1" font-size="13" fill="#222222" textLength="56" lengthAdjust="spacingAndGlyphs">23.03.2023</text>
<circle cx="81.6" cy="61.2" r="5.8" fill="#5c7cba"/>
<text x="92.5" y="66.1" font-size="13" fill="#5c7cba" textLength="65" lengthAdjust="spacingAndGlyphs">Самолет ао</text>
<text x="165" y="66.1" font-size="13" fill="#222222" textLength="51" lengthAdjust="spacingAndGlyphs">O: 2 486.0</text>
<text x="230" y="66.1" font-size="13" fill="#222222" textLength="52.5" lengthAdjust="spacingAndGlyphs">H: 2 490.5</text>
<text x="296.5" y="66.1" font-size="13" fill="#222222" textLength="47" lengthAdjust="spacingAndGlyphs">L: 2 475.0</text>
<text x="357.5" y="66.1" font-size="13" fill="#222222" textLength="51.5" lengthAdjust="spacingAndGlyphs">C: 2 480.0</text>
<circle cx="427" cy="61.2" r="5.8" fill="#e0400a"/>
<text x="437.5" y="66.1" font-size="13" fill="#e0400a" textLength="48.5" lengthAdjust="spacingAndGlyphs">EMA (12)</text>
<text x="498" y="66.1" font-size="13" fill="#222222" textLength="36.3" lengthAdjust="spacingAndGlyphs">2 509.7</text>
<circle cx="554.4" cy="61.2" r="5.8" fill="#0a9132"/>
<text x="565" y="66.1" font-size="13" fill="#0a9132" textLength="125.7" lengthAdjust="spacingAndGlyphs">BBANDS (50,2,2) Upper</text>
<text x="704" y="66.1" font-size="13" fill="#222222" textLength="37" lengthAdjust="spacingAndGlyphs">2 656.4</text>
<circle cx="13.1" cy="78" r="5.8" fill="#5c7cba"/>
<text x="23.2" y="82.9" font-size="13" fill="#5c7cba" textLength="128.3" lengthAdjust="spacingAndGlyphs">BBANDS (50,2,2) Middle</text>
<text x="165" y="82.9" font-size="13" fill="#222222" textLength="36.5" lengthAdjust="spacingAndGlyphs">2 546.5</text>
<circle cx="221.7" cy="78" r="5.8" fill="#e0400a"/>
<text x="231.5" y="82.9" font-size="13" fill="#e0400a" textLength="127" lengthAdjust="spacingAndGlyphs">BBANDS (50,2,2) Lower</text>
<text x="371" y="82.9" font-size="13" fill="#222222" textLength="35.5" lengthAdjust="spacingAndGlyphs">2 436.7</text>
<circle cx="426.7" cy="78" r="5.8" fill="#5c7cba"/>
<text x="437.5" y="82.9" font-size="13" fill="#5c7cba" textLength="113.8" lengthAdjust="spacingAndGlyphs">Самолет ао – Объём</text>
<text x="565" y="82.9" font-size="13" fill="#222222" textLength="56" lengthAdjust="spacingAndGlyphs">90 672 435</text>
<defs><clipPath id="cl"><rect x="7.5" y="503.5" width="677.2" height="68"/></clipPath>
<clipPath id="cm"><rect x="684.7" y="503.5" width="301.5" height="68"/></clipPath></defs>
<rect x="7.5" y="503.5" width="677.2" height="68.5" fill="#9b9b9b"/>
<rect x="986.2" y="503.5" width="12" height="68.5" fill="#9b9b9b"/>
<g stroke="#787878" stroke-width="1" stroke-dasharray="3 1" shape-rendering="crispEdges">
<path d="M18.5 503.5 V571.5"/>
<path d="M92.5 503.5 V571.5"/>
<path d="M165.5 503.5 V571.5"/>
<path d="M239.5 503.5 V571.5"/>
<path d="M313.5 503.5 V571.5"/>
<path d="M387.5 503.5 V571.5"/>
<path d="M460.5 503.5 V571.5"/>
<path d="M534.5 503.5 V571.5"/>
<path d="M608.5 503.5 V571.5"/>
<path d="M681.5 503.5 V571.5"/>
<path d="M7.5 511.5 H684.7"/>
<path d="M986.2 511.5 H997.7"/>
<path d="M7.5 532.5 H684.7"/>
<path d="M986.2 532.5 H997.7"/>
<path d="M7.5 552.5 H684.7"/>
<path d="M986.2 552.5 H997.7"/>
</g>
<g stroke="#cbcbcb" stroke-width="1" stroke-dasharray="3 1" shape-rendering="crispEdges">
<path d="M755.5 503.5 V571.5"/>
<path d="M829.5 503.5 V571.5"/>
<path d="M903.5 503.5 V571.5"/>
<path d="M976.5 503.5 V571.5"/>
<path d="M684.7 511.5 H986.2"/>
<path d="M684.7 532.5 H986.2"/>
<path d="M684.7 552.5 H986.2"/>
</g>
<path d="M18.5 561 L18.5 560.5 L28.6 561.2 L36.9 560.5 L47 559.8 L55.4 559.5 L60.5 558.8 L65.5 557.1 L77.3 556.5 L92.4 556.1 L110.8 556.1 L127.6 556.8 L141.1 556.1 L154.5 555.5 L165.6 555.1 L181.4 555.1 L193.1 554.1 L201.5 551.4 L207.3 547.7 L211.6 548.4 L228.4 548.1 L229.4 547.7 L230 547.2 L235 541.6 L238.6 542.3 L243.1 538.5 L247.1 540.3 L250.7 537.5 L254.7 539 L258.2 537.8 L263.3 537.5 L265.8 532.8 L268.3 532.3 L270.3 529.4 L272.5 532.5 L274.9 529.2 L277.9 524.5 L280.1 522.7 L282.4 523.5 L284.9 519.7 L287.7 513.4 L290 515.6 L292.5 514.3 L296 515.1 L298.5 518.6 L301.6 519.5 L304.6 521 L307.6 522.4 L310.6 521.2 L313.7 522.2 L316.7 521.7 L320.7 523.2 L324.3 521.5 L326.8 523.2 L330 523.4 L339.3 522.9 L344.3 521.9 L350.1 521.9 L360.2 522.2 L370.2 523.6 L376.9 524.9 L383.7 524.2 L387 523.6 L390.4 516.8 L392.7 519.5 L400.5 520.2 L407.2 521.2 L412.2 521.9 L417.3 521.2 L422.3 523.6 L428 523.6 L432.4 521.2 L440.8 521.9 L449.2 521.9 L452.5 523.6 L456.9 524.6 L458.6 528.6 L460.3 524.2 L464.3 525.9 L471 527.6 L474.4 526.2 L479.4 526.2 L483.8 523.6 L487.8 524.6 L491.2 526.6 L494.5 526.2 L497.9 528.6 L500.2 535.3 L501.9 547.1 L503.3 545.4 L505.3 552.8 L508 548.7 L510.6 540.3 L513 539.7 L518 544.4 L523.1 546.1 L528.1 548.7 L533.1 550.4 L536.5 550.4 L539.9 543.7 L541.5 548.1 L546.6 546.4 L551.6 545.4 L558.3 547.7 L565.1 548.7 L571.8 548.1 L578.5 548.7 L585.2 549.4 L591.9 551.1 L597 548.1 L602 548.7 L608.7 549.4 L615.4 547.7 L622.2 543.7 L625.5 545.4 L628.9 543.7 L635.6 545.4 L642.3 547.1 L649 545.4 L655.8 543.7 L660.8 542.7 L665.8 543.7 L670.9 544.7 L675.9 545.4 L679.3 543.7 L682 544.7 L684.2 544.3 L693.9 543.6 L704.3 542.6 L711.3 541.2 L718.2 540.2 L723.4 540.9 L728.6 539.5 L733.9 539.5 L737.3 541.9 L739.8 546.1 L743.2 545.4 L747.8 548.9 L753 551.6 L756.4 549.9 L761.7 551.6 L766.9 552.3 L772.1 550.6 L773.8 551.3 L778.3 548.2 L782.5 549.2 L787.7 549.2 L794.7 547.1 L799.9 546.4 L805.1 547.5 L812 547.1 L816.2 545.7 L822.5 547.5 L829.4 547.1 L836.4 547.8 L843.3 548.2 L850.3 548.9 L858.9 547.1 L864.2 548.5 L874.6 547.8 L881.5 548.2 L888.5 548.2 L893.7 546.8 L902.4 547.5 L909.3 547.1 L919.7 546.1 L930.2 545.7 L937.1 544.7 L940.6 546.4 L951 546.8 L958 546.1 L968.4 546.8 L978.8 547.5 L985.8 547.8 L985.8 561 Z" fill="#8d9397" clip-path="url(#cl)"/>
<path d="M18.5 561 L18.5 560.5 L28.6 561.2 L36.9 560.5 L47 559.8 L55.4 559.5 L60.5 558.8 L65.5 557.1 L77.3 556.5 L92.4 556.1 L110.8 556.1 L127.6 556.8 L141.1 556.1 L154.5 555.5 L165.6 555.1 L181.4 555.1 L193.1 554.1 L201.5 551.4 L207.3 547.7 L211.6 548.4 L228.4 548.1 L229.4 547.7 L230 547.2 L235 541.6 L238.6 542.3 L243.1 538.5 L247.1 540.3 L250.7 537.5 L254.7 539 L258.2 537.8 L263.3 537.5 L265.8 532.8 L268.3 532.3 L270.3 529.4 L272.5 532.5 L274.9 529.2 L277.9 524.5 L280.1 522.7 L282.4 523.5 L284.9 519.7 L287.7 513.4 L290 515.6 L292.5 514.3 L296 515.1 L298.5 518.6 L301.6 519.5 L304.6 521 L307.6 522.4 L310.6 521.2 L313.7 522.2 L316.7 521.7 L320.7 523.2 L324.3 521.5 L326.8 523.2 L330 523.4 L339.3 522.9 L344.3 521.9 L350.1 521.9 L360.2 522.2 L370.2 523.6 L376.9 524.9 L383.7 524.2 L387 523.6 L390.4 516.8 L392.7 519.5 L400.5 520.2 L407.2 521.2 L412.2 521.9 L417.3 521.2 L422.3 523.6 L428 523.6 L432.4 521.2 L440.8 521.9 L449.2 521.9 L452.5 523.6 L456.9 524.6 L458.6 528.6 L460.3 524.2 L464.3 525.9 L471 527.6 L474.4 526.2 L479.4 526.2 L483.8 523.6 L487.8 524.6 L491.2 526.6 L494.5 526.2 L497.9 528.6 L500.2 535.3 L501.9 547.1 L503.3 545.4 L505.3 552.8 L508 548.7 L510.6 540.3 L513 539.7 L518 544.4 L523.1 546.1 L528.1 548.7 L533.1 550.4 L536.5 550.4 L539.9 543.7 L541.5 548.1 L546.6 546.4 L551.6 545.4 L558.3 547.7 L565.1 548.7 L571.8 548.1 L578.5 548.7 L585.2 549.4 L591.9 551.1 L597 548.1 L602 548.7 L608.7 549.4 L615.4 547.7 L622.2 543.7 L625.5 545.4 L628.9 543.7 L635.6 545.4 L642.3 547.1 L649 545.4 L655.8 543.7 L660.8 542.7 L665.8 543.7 L670.9 544.7 L675.9 545.4 L679.3 543.7 L682 544.7 L684.2 544.3 L693.9 543.6 L704.3 542.6 L711.3 541.2 L718.2 540.2 L723.4 540.9 L728.6 539.5 L733.9 539.5 L737.3 541.9 L739.8 546.1 L743.2 545.4 L747.8 548.9 L753 551.6 L756.4 549.9 L761.7 551.6 L766.9 552.3 L772.1 550.6 L773.8 551.3 L778.3 548.2 L782.5 549.2 L787.7 549.2 L794.7 547.1 L799.9 546.4 L805.1 547.5 L812 547.1 L816.2 545.7 L822.5 547.5 L829.4 547.1 L836.4 547.8 L843.3 548.2 L850.3 548.9 L858.9 547.1 L864.2 548.5 L874.6 547.8 L881.5 548.2 L888.5 548.2 L893.7 546.8 L902.4 547.5 L909.3 547.1 L919.7 546.1 L930.2 545.7 L937.1 544.7 L940.6 546.4 L951 546.8 L958 546.1 L968.4 546.8 L978.8 547.5 L985.8 547.8 L985.8 561 Z" fill="#ecf2fa" clip-path="url(#cm)"/>
<polyline points="18.5,560.5 28.6,561.2 36.9,560.5 47,559.8 55.4,559.5 60.5,558.8 65.5,557.1 77.3,556.5 92.4,556.1 110.8,556.1 127.6,556.8 141.1,556.1 154.5,555.5 165.6,555.1 181.4,555.1 193.1,554.1 201.5,551.4 207.3,547.7 211.6,548.4 228.4,548.1 229.4,547.7 230,547.2 235,541.6 238.6,542.3 243.1,538.5 247.1,540.3 250.7,537.5 254.7,539 258.2,537.8 263.3,537.5 265.8,532.8 268.3,532.3 270.3,529.4 272.5,532.5 274.9,529.2 277.9,524.5 280.1,522.7 282.4,523.5 284.9,519.7 287.7,513.4 290,515.6 292.5,514.3 296,515.1 298.5,518.6 301.6,519.5 304.6,521 307.6,522.4 310.6,521.2 313.7,522.2 316.7,521.7 320.7,523.2 324.3,521.5 326.8,523.2 330,523.4 339.3,522.9 344.3,521.9 350.1,521.9 360.2,522.2 370.2,523.6 376.9,524.9 383.7,524.2 387,523.6 390.4,516.8 392.7,519.5 400.5,520.2 407.2,521.2 412.2,521.9 417.3,521.2 422.3,523.6 428,523.6 432.4,521.2 440.8,521.9 449.2,521.9 452.5,523.6 456.9,524.6 458.6,528.6 460.3,524.2 464.3,525.9 471,527.6 474.4,526.2 479.4,526.2 483.8,523.6 487.8,524.6 491.2,526.6 494.5,526.2 497.9,528.6 500.2,535.3 501.9,547.1 503.3,545.4 505.3,552.8 508,548.7 510.6,540.3 513,539.7 518,544.4 523.1,546.1 528.1,548.7 533.1,550.4 536.5,550.4 539.9,543.7 541.5,548.1 546.6,546.4 551.6,545.4 558.3,547.7 565.1,548.7 571.8,548.1 578.5,548.7 585.2,549.4 591.9,551.1 597,548.1 602,548.7 608.7,549.4 615.4,547.7 622.2,543.7 625.5,545.4 628.9,543.7 635.6,545.4 642.3,547.1 649,545.4 655.8,543.7 660.8,542.7 665.8,543.7 670.9,544.7 675.9,545.4 679.3,543.7 682,544.7 684.2,544.3 693.9,543.6 704.3,542.6 711.3,541.2 718.2,540.2 723.4,540.9 728.6,539.5 733.9,539.5 737.3,541.9 739.8,546.1 743.2,545.4 747.8,548.9 753,551.6 756.4,549.9 761.7,551.6 766.9,552.3 772.1,550.6 773.8,551.3 778.3,548.2 782.5,549.2 787.7,549.2 794.7,547.1 799.9,546.4 805.1,547.5 812,547.1 816.2,545.7 822.5,547.5 829.4,547.1 836.4,547.8 843.3,548.2 850.3,548.9 858.9,547.1 864.2,548.5 874.6,547.8 881.5,548.2 888.5,548.2 893.7,546.8 902.4,547.5 909.3,547.1 919.7,546.1 930.2,545.7 937.1,544.7 940.6,546.4 951,546.8 958,546.1 968.4,546.8 978.8,547.5 985.8,547.8" fill="none" stroke="#33497c" stroke-width="1.05" stroke-linejoin="round" stroke-linecap="butt" clip-path="url(#cl)"/>
<polyline points="18.5,560.5 28.6,561.2 36.9,560.5 47,559.8 55.4,559.5 60.5,558.8 65.5,557.1 77.3,556.5 92.4,556.1 110.8,556.1 127.6,556.8 141.1,556.1 154.5,555.5 165.6,555.1 181.4,555.1 193.1,554.1 201.5,551.4 207.3,547.7 211.6,548.4 228.4,548.1 229.4,547.7 230,547.2 235,541.6 238.6,542.3 243.1,538.5 247.1,540.3 250.7,537.5 254.7,539 258.2,537.8 263.3,537.5 265.8,532.8 268.3,532.3 270.3,529.4 272.5,532.5 274.9,529.2 277.9,524.5 280.1,522.7 282.4,523.5 284.9,519.7 287.7,513.4 290,515.6 292.5,514.3 296,515.1 298.5,518.6 301.6,519.5 304.6,521 307.6,522.4 310.6,521.2 313.7,522.2 316.7,521.7 320.7,523.2 324.3,521.5 326.8,523.2 330,523.4 339.3,522.9 344.3,521.9 350.1,521.9 360.2,522.2 370.2,523.6 376.9,524.9 383.7,524.2 387,523.6 390.4,516.8 392.7,519.5 400.5,520.2 407.2,521.2 412.2,521.9 417.3,521.2 422.3,523.6 428,523.6 432.4,521.2 440.8,521.9 449.2,521.9 452.5,523.6 456.9,524.6 458.6,528.6 460.3,524.2 464.3,525.9 471,527.6 474.4,526.2 479.4,526.2 483.8,523.6 487.8,524.6 491.2,526.6 494.5,526.2 497.9,528.6 500.2,535.3 501.9,547.1 503.3,545.4 505.3,552.8 508,548.7 510.6,540.3 513,539.7 518,544.4 523.1,546.1 528.1,548.7 533.1,550.4 536.5,550.4 539.9,543.7 541.5,548.1 546.6,546.4 551.6,545.4 558.3,547.7 565.1,548.7 571.8,548.1 578.5,548.7 585.2,549.4 591.9,551.1 597,548.1 602,548.7 608.7,549.4 615.4,547.7 622.2,543.7 625.5,545.4 628.9,543.7 635.6,545.4 642.3,547.1 649,545.4 655.8,543.7 660.8,542.7 665.8,543.7 670.9,544.7 675.9,545.4 679.3,543.7 682,544.7 684.2,544.3 693.9,543.6 704.3,542.6 711.3,541.2 718.2,540.2 723.4,540.9 728.6,539.5 733.9,539.5 737.3,541.9 739.8,546.1 743.2,545.4 747.8,548.9 753,551.6 756.4,549.9 761.7,551.6 766.9,552.3 772.1,550.6 773.8,551.3 778.3,548.2 782.5,549.2 787.7,549.2 794.7,547.1 799.9,546.4 805.1,547.5 812,547.1 816.2,545.7 822.5,547.5 829.4,547.1 836.4,547.8 843.3,548.2 850.3,548.9 858.9,547.1 864.2,548.5 874.6,547.8 881.5,548.2 888.5,548.2 893.7,546.8 902.4,547.5 909.3,547.1 919.7,546.1 930.2,545.7 937.1,544.7 940.6,546.4 951,546.8 958,546.1 968.4,546.8 978.8,547.5 985.8,547.8" fill="none" stroke="#6f8fc8" stroke-width="1.05" stroke-linejoin="round" stroke-linecap="butt" clip-path="url(#cm)"/>
<g stroke-width="1" fill="none" shape-rendering="crispEdges">
<path d="M684.7 503.5 H986.2" stroke="#aaa"/>
<path d="M684.7 571.5 H986.2" stroke="#aaa"/>
<path d="M7 503.5 H684.7 M986.2 503.5 H998.2" stroke="#555" stroke-width="1.4"/>
<path d="M7.5 503.5 V571.5" stroke="#777"/>
</g>
<g stroke="#8a8a8a" stroke-width="1" fill="none" shape-rendering="crispEdges">
<path d="M18.5 572 v4"/>
<path d="M92.5 572 v4"/>
<path d="M165.5 572 v4"/>
<path d="M239.5 572 v4"/>
<path d="M313.5 572 v4"/>
<path d="M387.5 572 v4"/>
<path d="M460.5 572 v4"/>
<path d="M534.5 572 v4"/>
<path d="M608.5 572 v4"/>
<path d="M681.5 572 v4"/>
<path d="M755.5 572 v4"/>
<path d="M829.5 572 v4"/>
<path d="M903.5 572 v4"/>
<path d="M976.5 572 v4"/>
<path d="M997.7 511.5 h4.5"/>
<path d="M997.7 532.5 h4.5"/>
<path d="M997.7 552.5 h4.5"/>
</g>
<rect x="680.3" y="528.6" width="7.2" height="19.4" rx="3" fill="#fff" stroke="#555" stroke-width="1.2"/>
<path d="M682.5 533 v11.5 M685.3 533 v11.5" stroke="#a0a0a0" stroke-width="1.3"/>
<rect x="981.8" y="528.6" width="7.2" height="19.4" rx="3" fill="#fff" stroke="#555" stroke-width="1.2"/>
<path d="M984 533 v11.5 M986.8 533 v11.5" stroke="#a0a0a0" stroke-width="1.3"/>
<text x="1005.1" y="514" font-size="9" fill="#555555" textLength="24.6" lengthAdjust="spacingAndGlyphs">6 000</text>
<text x="1005.1" y="535" font-size="9" fill="#555555" textLength="24.6" lengthAdjust="spacingAndGlyphs">4 000</text>
<text x="1005.1" y="555" font-size="9" fill="#555555" textLength="24.6" lengthAdjust="spacingAndGlyphs">2 000</text>
<text x="5.8" y="583.6" font-size="9" fill="#555555" textLength="25.9" lengthAdjust="spacingAndGlyphs">4 мар</text>
<text x="77.8" y="583.6" font-size="9" fill="#555555" textLength="30" lengthAdjust="spacingAndGlyphs">28 апр</text>
<text x="149.8" y="583.6" font-size="9" fill="#555555" textLength="32" lengthAdjust="spacingAndGlyphs">22 июн</text>
<text x="225.8" y="583.6" font-size="9" fill="#555555" textLength="28" lengthAdjust="spacingAndGlyphs">13 авг</text>
<text x="302.5" y="583.6" font-size="9" fill="#555555" textLength="22.6" lengthAdjust="spacingAndGlyphs">6 окт</text>
<text x="372.8" y="583.6" font-size="9" fill="#555555" textLength="29.9" lengthAdjust="spacingAndGlyphs">30 ноя</text>
<text x="446" y="583.6" font-size="9" fill="#555555" textLength="29.7" lengthAdjust="spacingAndGlyphs">25 янв</text>
<text x="519.8" y="583.6" font-size="9" fill="#555555" textLength="30" lengthAdjust="spacingAndGlyphs">18 апр</text>
<text x="592.8" y="583.6" font-size="9" fill="#555555" textLength="32" lengthAdjust="spacingAndGlyphs">16 июн</text>
<text x="670.5" y="583.6" font-size="9" fill="#555555" textLength="22.5" lengthAdjust="spacingAndGlyphs">9 авг</text>
<text x="741" y="583.6" font-size="9" fill="#555555" textLength="29.5" lengthAdjust="spacingAndGlyphs">30 сен</text>
<text x="814.8" y="583.6" font-size="9" fill="#555555" textLength="29.9" lengthAdjust="spacingAndGlyphs">24 ноя</text>
<text x="889" y="583.6" font-size="9" fill="#555555" textLength="29.7" lengthAdjust="spacingAndGlyphs">19 янв</text>
<text x="961.1" y="583.6" font-size="9" fill="#555555" textLength="31.4" lengthAdjust="spacingAndGlyphs">16 мар</text>
<text x="7.8" y="594.4" font-size="9" fill="#555555" textLength="21.9" lengthAdjust="spacingAndGlyphs">2021</text>
<text x="450.2" y="594.4" font-size="9" fill="#555555" textLength="21.9" lengthAdjust="spacingAndGlyphs">2022</text>
<text x="892.7" y="594.4" font-size="9" fill="#555555" textLength="21.9" lengthAdjust="spacingAndGlyphs">2023</text>
<text x="6.8" y="615.4" font-size="13" fill="#222222" textLength="56" lengthAdjust="spacingAndGlyphs">23.03.2023</text>
<circle cx="82.5" cy="610.8" r="5.8" fill="#ff8c00"/>
<text x="92.4" y="615.4" font-size="13" fill="#ff8c00" textLength="84" lengthAdjust="spacingAndGlyphs">MACD (12,26,9)</text>
<text x="189.8" y="615.4" font-size="13" fill="#222222" textLength="53.7" lengthAdjust="spacingAndGlyphs">−18.85612</text>
<circle cx="263" cy="610.8" r="5.8" fill="#5c7cba"/>
<text x="273.8" y="615.4" font-size="13" fill="#5c7cba" textLength="119.9" lengthAdjust="spacingAndGlyphs">MACD (12,26,9) Signal</text>
<text x="407.2" y="615.4" font-size="13" fill="#222222" textLength="53.7" lengthAdjust="spacingAndGlyphs">−11.38648</text>
<circle cx="480.2" cy="610.8" r="5.8" fill="#0a9132"/>
<text x="490.5" y="615.4" font-size="13" fill="#0a9132" textLength="108.8" lengthAdjust="spacingAndGlyphs">MACD (12,26,9) Hist</text>
<text x="612.1" y="615.4" font-size="13" fill="#222222" textLength="48.7" lengthAdjust="spacingAndGlyphs">−7.46964</text>
<path d="M1037 613.5 l7 7 M1044 613.5 l-7 7" stroke="#111" stroke-width="1.3" fill="none"/>
<g stroke="#cbcbcb" stroke-width="1" stroke-dasharray="3 1" fill="none" shape-rendering="crispEdges">
<path d="M7.5 640.5 H997.5"/>
<path d="M7.5 683.5 H997.5"/>
<path d="M7.5 704.5 H997.5"/>
<path d="M7.5 726.5 H997.5"/>
<path d="M40.5 621.5 V744"/>
<path d="M114.5 621.5 V744"/>
<path d="M187.5 621.5 V744"/>
<path d="M261.5 621.5 V744"/>
<path d="M334.5 621.5 V744"/>
<path d="M408.5 621.5 V744"/>
<path d="M481.5 621.5 V744"/>
<path d="M555.5 621.5 V744"/>
<path d="M628.5 621.5 V744"/>
<path d="M702.5 621.5 V744"/>
<path d="M775.5 621.5 V744"/>
<path d="M849.5 621.5 V744"/>
<path d="M922.5 621.5 V744"/>
</g>
<g stroke="#8a8a8a" stroke-width="1" fill="none" shape-rendering="crispEdges">
<path d="M7.5 662.5 H997.5"/>
<path d="M7.5 744 V621.5 H997.5 V744"/>
<path d="M997.5 640.5 h4.5"/>
<path d="M997.5 683.5 h4.5"/>
<path d="M997.5 704.5 h4.5"/>
<path d="M997.5 726.5 h4.5"/>
<path d="M997.5 662.5 h4.5"/>
</g>
<polyline points="16.1,652.7 22.2,653.4 28.2,653.4 34.6,653.1 40.6,652.4 46.7,651.7 52.7,651.1 59.1,650.1 65.2,649.4 71.2,648.4 77.3,647 83.6,645.7 89.7,643 95.7,642 101.8,641 108.2,638.6 114.2,635.9 120.3,634.3 126.3,633.6 132.7,633.6 138.7,633.3 144.8,632.6 150,632 156.3,630.6 162.6,631.4 168.9,631.6 174.1,633.5 178.3,636.2 181.4,639.3 183.5,643 185.6,648.7 187.7,654 191.9,660.8 196.1,667.1 200.2,672.5 205.4,681 211.4,692.8 217.5,703 224.2,713.7 230.2,722.8 236.3,727.8 243,729.2 249,731.2 255.1,732.9 261.1,734.1 267.2,735.5 273.2,734.8 279.9,732.8 286,728.2 292.7,723.8 298.1,721.1 303.5,713.7 309.5,704.3 315.5,698.3 322.3,693.3 329,689.5 334.4,686.2 340,683.5 346.7,678.9 353.1,672.2 359.1,666.5 365.2,661.5 371.2,657.8 377.6,654.8 383.7,653.1 389.7,652.4 395.8,652.1 402.1,651.7 408.2,651.4 414.2,651.1 420.3,648.7 426.7,646.4 432.7,646.4 438.8,648 444.8,650.4 450.8,652.1 457.2,653.1 463.3,653.7 469.3,654.8 475.4,656.1 481.8,657.8 487.8,659.5 493.8,660.5 499.9,661.5 506.3,662.5 512.3,663.8 518.4,664.8 524.4,665.8 530.8,666.8 536.8,666.8 542.9,666.8 548.9,666.5 555.3,665.8 561.4,663.8 567.4,662.8 573.5,663.2 579.5,663.8 585.9,664.5 591.9,664.2 598,663.8 604,663.5 610.4,663.2 616.5,662.8 622.5,662.8 628.5,662.8 634.6,662.8 641,663.2 647,663.5 653.1,663.8 659.1,663.5 665.5,661.8 671.5,658.8 677.6,656.4 683.8,655.6 689.7,654.6 696,654.6 702.2,655.6 708.1,657 714.4,657.3 720.3,657.3 726.6,657 732.8,656.3 738.7,655.6 745,654.9 751.2,652.8 757.1,652.1 763.4,651.4 769.6,650.7 775.6,650 781.8,649.7 787.7,649.7 794,649.7 800.2,647.9 806.1,646.6 812.4,646.2 818.6,648.6 824.5,651.1 830.8,653.2 837.1,654.9 843,656.3 849.2,657.7 855.1,658.4 861.4,657.3 867.6,656.3 873.5,656.3 879.8,657.3 886,658.4 892,659.1 898.2,659.8 904.1,660.5 910.4,661.2 916.6,661.8 922.5,662.5 928.8,663.9 935,665 940.9,665.7 947.2,665.7 953.5,666 959.4,666.7 965.6,667.1" fill="none" stroke="#ff8c00" stroke-width="2" stroke-linejoin="round" stroke-linecap="butt"/>
<polyline points="16.1,648.7 22.2,649.7 28.2,650.7 34.6,651.4 40.6,651.7 46.7,651.7 52.7,651.4 59.1,651.1 65.2,650.7 71.2,650.4 77.3,649.7 83.6,649 89.7,648 95.7,647 101.8,646 108.2,644.7 114.2,643 120.3,641.3 126.3,640 132.7,638.6 138.7,637.6 144.8,636.6 150,636.5 160,635 170,634 176,634 181.4,635.1 187.2,639.3 191.9,643 197.2,647.2 202.4,651.9 207.1,657.1 211.3,662.4 215,667.1 218.1,671.3 221.8,676 225.5,680.7 228.6,685.3 233.6,693.6 240.3,700.9 247,707 253.7,712.4 261.1,717.7 267.2,721.1 273.9,724.2 280.6,725.8 287.3,726.1 294,725.5 300.8,723.8 307.5,720.4 314.2,716.4 320.9,711.7 327.6,707.7 334.4,703 340,699.6 346.7,695.1 353.1,690.7 359.1,685.7 365.2,680.6 371.2,675.6 377.6,671.2 383.7,667.2 389.7,663.8 395.8,661.1 402.1,658.8 408.2,657.1 414.2,655.4 420.3,653.7 426.7,652.4 432.7,651.4 438.8,650.7 444.8,650.4 450.8,650.7 457.2,651.4 463.3,651.7 469.3,652.4 475.4,653.1 481.8,653.7 487.8,654.8 493.8,656.1 499.9,657.4 506.3,658.8 512.3,659.8 518.4,661.1 524.4,662.1 530.8,662.8 536.8,663.5 542.9,663.8 548.9,664.2 555.3,664.5 561.4,664.2 567.4,663.8 573.5,663.8 579.5,663.8 585.9,663.8 591.9,663.8 598,663.8 604,663.8 610.4,663.5 616.5,663.5 622.5,663.2 628.5,663.2 634.6,663.2 641,663.2 647,663.2 653.1,663.2 659.1,663.2 665.5,662.8 671.5,662.1 677.6,660.8 683.8,657.7 689.7,657.3 696,657 702.2,656.6 708.1,657 714.4,657 720.3,657 726.6,657 732.8,656.6 738.7,656.6 745,656.3 751.2,655.6 757.1,654.9 763.4,654.2 769.6,653.5 775.6,652.8 781.8,652.1 787.7,651.4 794,651.1 800.2,650.4 806.1,649.7 812.4,649 818.6,649 824.5,649.7 830.8,650.7 837.1,651.8 843,652.8 849.2,654.2 855.1,654.9 861.4,655.6 867.6,655.9 873.5,656.3 879.8,656.6 886,657.3 892,657.7 898.2,658.4 904.1,659.1 910.4,659.8 916.6,660.5 922.5,661.2 928.8,661.8 935,662.9 940.9,663.6 947.2,663.9 953.5,664.3 959.4,664.6 965.6,665" fill="none" stroke="#5c7cba" stroke-width="2" stroke-linejoin="round" stroke-linecap="butt"/>
<g fill="#0a9132">
<rect x="14.1" y="662.5" width="4.9" height="4.5"/>
<rect x="20.1" y="662.5" width="4.9" height="3.5"/>
<rect x="26.1" y="662.5" width="4.9" height="2.5"/>
<rect x="32" y="662.5" width="4.9" height="2.5"/>
<rect x="38" y="662.5" width="4.9" height="1.5"/>
<rect x="44" y="662.5" width="4.9" height="0.5"/>
<rect x="50" y="662.5" width="4.9" height="0.5"/>
<rect x="57" y="661" width="4.9" height="1.5"/>
<rect x="63" y="660" width="4.9" height="2.5"/>
<rect x="69" y="660" width="4.9" height="2.5"/>
<rect x="75" y="659" width="4.9" height="3.5"/>
<rect x="81" y="659" width="4.9" height="3.5"/>
<rect x="87" y="657" width="4.9" height="5.5"/>
<rect x="93" y="658" width="4.9" height="4.5"/>
<rect x="99" y="658" width="4.9" height="4.5"/>
<rect x="106" y="656" width="4.9" height="6.5"/>
<rect x="112" y="655" width="4.9" height="7.5"/>
<rect x="118" y="655" width="4.9" height="7.5"/>
<rect x="124" y="656" width="4.9" height="6.5"/>
<rect x="130.1" y="657" width="4.9" height="5.5"/>
<rect x="136.1" y="658" width="4.9" height="4.5"/>
<rect x="142.1" y="658" width="4.9" height="4.5"/>
<rect x="148.1" y="657" width="4.9" height="5.5"/>
<rect x="155.1" y="657" width="4.9" height="5.5"/>
<rect x="161.1" y="659" width="4.9" height="3.5"/>
<rect x="167.1" y="660" width="4.9" height="2.5"/>
<rect x="173.1" y="662" width="4.9" height="0.5"/>
<rect x="179.1" y="662.5" width="4.9" height="4.5"/>
<rect x="185.1" y="662.5" width="4.9" height="14.5"/>
<rect x="191.1" y="662.5" width="4.9" height="19.5"/>
<rect x="197.1" y="662.5" width="4.9" height="21.5"/>
<rect x="204.1" y="662.5" width="4.9" height="25.5"/>
<rect x="210.1" y="662.5" width="4.9" height="30.5"/>
<rect x="216.1" y="662.5" width="4.9" height="32.5"/>
<rect x="222.1" y="662.5" width="4.9" height="33.5"/>
<rect x="228.1" y="662.5" width="4.9" height="34.5"/>
<rect x="234.1" y="662.5" width="4.9" height="31.5"/>
<rect x="240.1" y="662.5" width="4.9" height="25.5"/>
<rect x="246.1" y="662.5" width="4.9" height="22.5"/>
<rect x="253.1" y="662.5" width="4.9" height="19.5"/>
<rect x="259.1" y="662.5" width="4.9" height="16.5"/>
<rect x="265.1" y="662.5" width="4.9" height="14.5"/>
<rect x="271.1" y="662.5" width="4.9" height="11.5"/>
<rect x="277.1" y="662.5" width="4.9" height="7.5"/>
<rect x="283.1" y="662.5" width="4.9" height="2.5"/>
<rect x="289.1" y="661" width="4.9" height="1.5"/>
<rect x="295.1" y="659" width="4.9" height="3.5"/>
<rect x="302.1" y="652" width="4.9" height="10.5"/>
<rect x="308.1" y="647" width="4.9" height="15.5"/>
<rect x="314.1" y="645" width="4.9" height="17.5"/>
<rect x="320.1" y="645" width="4.9" height="17.5"/>
<rect x="326.1" y="646" width="4.9" height="16.5"/>
<rect x="332.1" y="647" width="4.9" height="15.5"/>
<rect x="338.1" y="646" width="4.9" height="16.5"/>
<rect x="344.1" y="645" width="4.9" height="17.5"/>
<rect x="351.1" y="645" width="4.9" height="17.5"/>
<rect x="357.1" y="644" width="4.9" height="18.5"/>
<rect x="363.1" y="644" width="4.9" height="18.5"/>
<rect x="369.1" y="644" width="4.9" height="18.5"/>
<rect x="375.1" y="645" width="4.9" height="17.5"/>
<rect x="381.1" y="647" width="4.9" height="15.5"/>
<rect x="387.1" y="649" width="4.9" height="13.5"/>
<rect x="393.1" y="650" width="4.9" height="12.5"/>
<rect x="400.1" y="652" width="4.9" height="10.5"/>
<rect x="406.1" y="654" width="4.9" height="8.5"/>
<rect x="412.1" y="655" width="4.9" height="7.5"/>
<rect x="418.1" y="655" width="4.9" height="7.5"/>
<rect x="424.1" y="654" width="4.9" height="8.5"/>
<rect x="430.1" y="655" width="4.9" height="7.5"/>
<rect x="436.1" y="657" width="4.9" height="5.5"/>
<rect x="442.1" y="659" width="4.9" height="3.5"/>
<rect x="449.1" y="662" width="4.9" height="0.5"/>
<rect x="455.1" y="662.5" width="4.9" height="0.5"/>
<rect x="461.1" y="662.5" width="4.9" height="1.5"/>
<rect x="467.1" y="662.5" width="4.9" height="1.5"/>
<rect x="473.1" y="662.5" width="4.9" height="1.5"/>
<rect x="479.1" y="662.5" width="4.9" height="2.5"/>
<rect x="485.1" y="662.5" width="4.9" height="2.5"/>
<rect x="491.1" y="662.5" width="4.9" height="2.5"/>
<rect x="498.1" y="662.5" width="4.9" height="3.5"/>
<rect x="504.1" y="662.5" width="4.9" height="3.5"/>
<rect x="510.1" y="662.5" width="4.9" height="3.5"/>
<rect x="516" y="662.5" width="4.9" height="3.5"/>
<rect x="522" y="662.5" width="4.9" height="3.5"/>
<rect x="528" y="662.5" width="4.9" height="3.5"/>
<rect x="534" y="662.5" width="4.9" height="3.5"/>
<rect x="540" y="662.5" width="4.9" height="2.5"/>
<rect x="547" y="662.5" width="4.9" height="2.5"/>
<rect x="553" y="662.5" width="4.9" height="1.5"/>
<rect x="559" y="661" width="4.9" height="1.5"/>
<rect x="565" y="660" width="4.9" height="2.5"/>
<rect x="571" y="661" width="4.9" height="1.5"/>
<rect x="577" y="662" width="4.9" height="0.5"/>
<rect x="583" y="662" width="4.9" height="0.5"/>
<rect x="589" y="662" width="4.9" height="0.5"/>
<rect x="596" y="662" width="4.9" height="0.5"/>
<rect x="602" y="661" width="4.9" height="1.5"/>
<rect x="608" y="661" width="4.9" height="1.5"/>
<rect x="614" y="661" width="4.9" height="1.5"/>
<rect x="620" y="661" width="4.9" height="1.5"/>
<rect x="626" y="661" width="4.9" height="1.5"/>
<rect x="632" y="661" width="4.9" height="1.5"/>
<rect x="638" y="661" width="4.9" height="1.5"/>
<rect x="645" y="662" width="4.9" height="0.5"/>
<rect x="651" y="662" width="4.9" height="0.5"/>
<rect x="657" y="662" width="4.9" height="0.5"/>
<rect x="663" y="660" width="4.9" height="2.5"/>
<rect x="669" y="658" width="4.9" height="4.5"/>
<rect x="675" y="657" width="4.9" height="5.5"/>
<rect x="681" y="657" width="4.9" height="5.5"/>
<rect x="687" y="657" width="4.9" height="5.5"/>
<rect x="694" y="658" width="4.9" height="4.5"/>
<rect x="700" y="658" width="4.9" height="4.5"/>
<rect x="706" y="661" width="4.9" height="1.5"/>
<rect x="712" y="661" width="4.9" height="1.5"/>
<rect x="718" y="661" width="4.9" height="1.5"/>
<rect x="724" y="661" width="4.9" height="1.5"/>
<rect x="730" y="661" width="4.9" height="1.5"/>
<rect x="736" y="661" width="4.9" height="1.5"/>
<rect x="743" y="660" width="4.9" height="2.5"/>
<rect x="749" y="659" width="4.9" height="3.5"/>
<rect x="755" y="659" width="4.9" height="3.5"/>
<rect x="761" y="659" width="4.9" height="3.5"/>
<rect x="767" y="659" width="4.9" height="3.5"/>
<rect x="773" y="659" width="4.9" height="3.5"/>
<rect x="779" y="659" width="4.9" height="3.5"/>
<rect x="785" y="660" width="4.9" height="2.5"/>
<rect x="792" y="660" width="4.9" height="2.5"/>
<rect x="798" y="659" width="4.9" height="3.5"/>
<rect x="804" y="658" width="4.9" height="4.5"/>
<rect x="810" y="659" width="4.9" height="3.5"/>
<rect x="816" y="661" width="4.9" height="1.5"/>
<rect x="822" y="662.5" width="4.9" height="1.5"/>
<rect x="828" y="662.5" width="4.9" height="2.5"/>
<rect x="834" y="662.5" width="4.9" height="3.5"/>
<rect x="841" y="662.5" width="4.9" height="3.5"/>
<rect x="847" y="662.5" width="4.9" height="4.5"/>
<rect x="853" y="662.5" width="4.9" height="3.5"/>
<rect x="859" y="662.5" width="4.9" height="1.5"/>
<rect x="865" y="662.5" width="4.9" height="1.5"/>
<rect x="871" y="662.5" width="4.9" height="0.5"/>
<rect x="877" y="662.5" width="4.9" height="1.5"/>
<rect x="883" y="662.5" width="4.9" height="1.5"/>
<rect x="890" y="662.5" width="4.9" height="1.5"/>
<rect x="896" y="662.5" width="4.9" height="1.5"/>
<rect x="902" y="662.5" width="4.9" height="2.5"/>
<rect x="908" y="662.5" width="4.9" height="2.5"/>
<rect x="914" y="662.5" width="4.9" height="2.5"/>
<rect x="920" y="662.5" width="4.9" height="2.5"/>
<rect x="927" y="662.5" width="4.9" height="2.5"/>
<rect x="933" y="662.5" width="4.9" height="3.5"/>
<rect x="939" y="662.5" width="4.9" height="3.5"/>
<rect x="945" y="662.5" width="4.9" height="2.5"/>
<rect x="951" y="662.5" width="4.9" height="2.5"/>
<rect x="957" y="662.5" width="4.9" height="2.5"/>
<rect x="963" y="662.5" width="4.9" height="2.5"/>
</g>
<text x="1005.1" y="643" font-size="9" fill="#555555" textLength="11" lengthAdjust="spacingAndGlyphs">75</text>
<text x="1005.1" y="686" font-size="9" fill="#555555" textLength="16.7" lengthAdjust="spacingAndGlyphs">−75</text>
<text x="1005.1" y="707" font-size="9" fill="#555555" textLength="22.2" lengthAdjust="spacingAndGlyphs">−150</text>
<text x="1005.1" y="729" font-size="9" fill="#555555" textLength="22.2" lengthAdjust="spacingAndGlyphs">−225</text>
<text x="1005.1" y="665" font-size="9" fill="#555555" textLength="5.5" lengthAdjust="spacingAndGlyphs">0</text>
<text x="928" y="738" font-size="17" fill="#888" font-weight="bold" textLength="58" lengthAdjust="spacingAndGlyphs" opacity="0.30">mfd.ru</text>
</svg></body></html>
